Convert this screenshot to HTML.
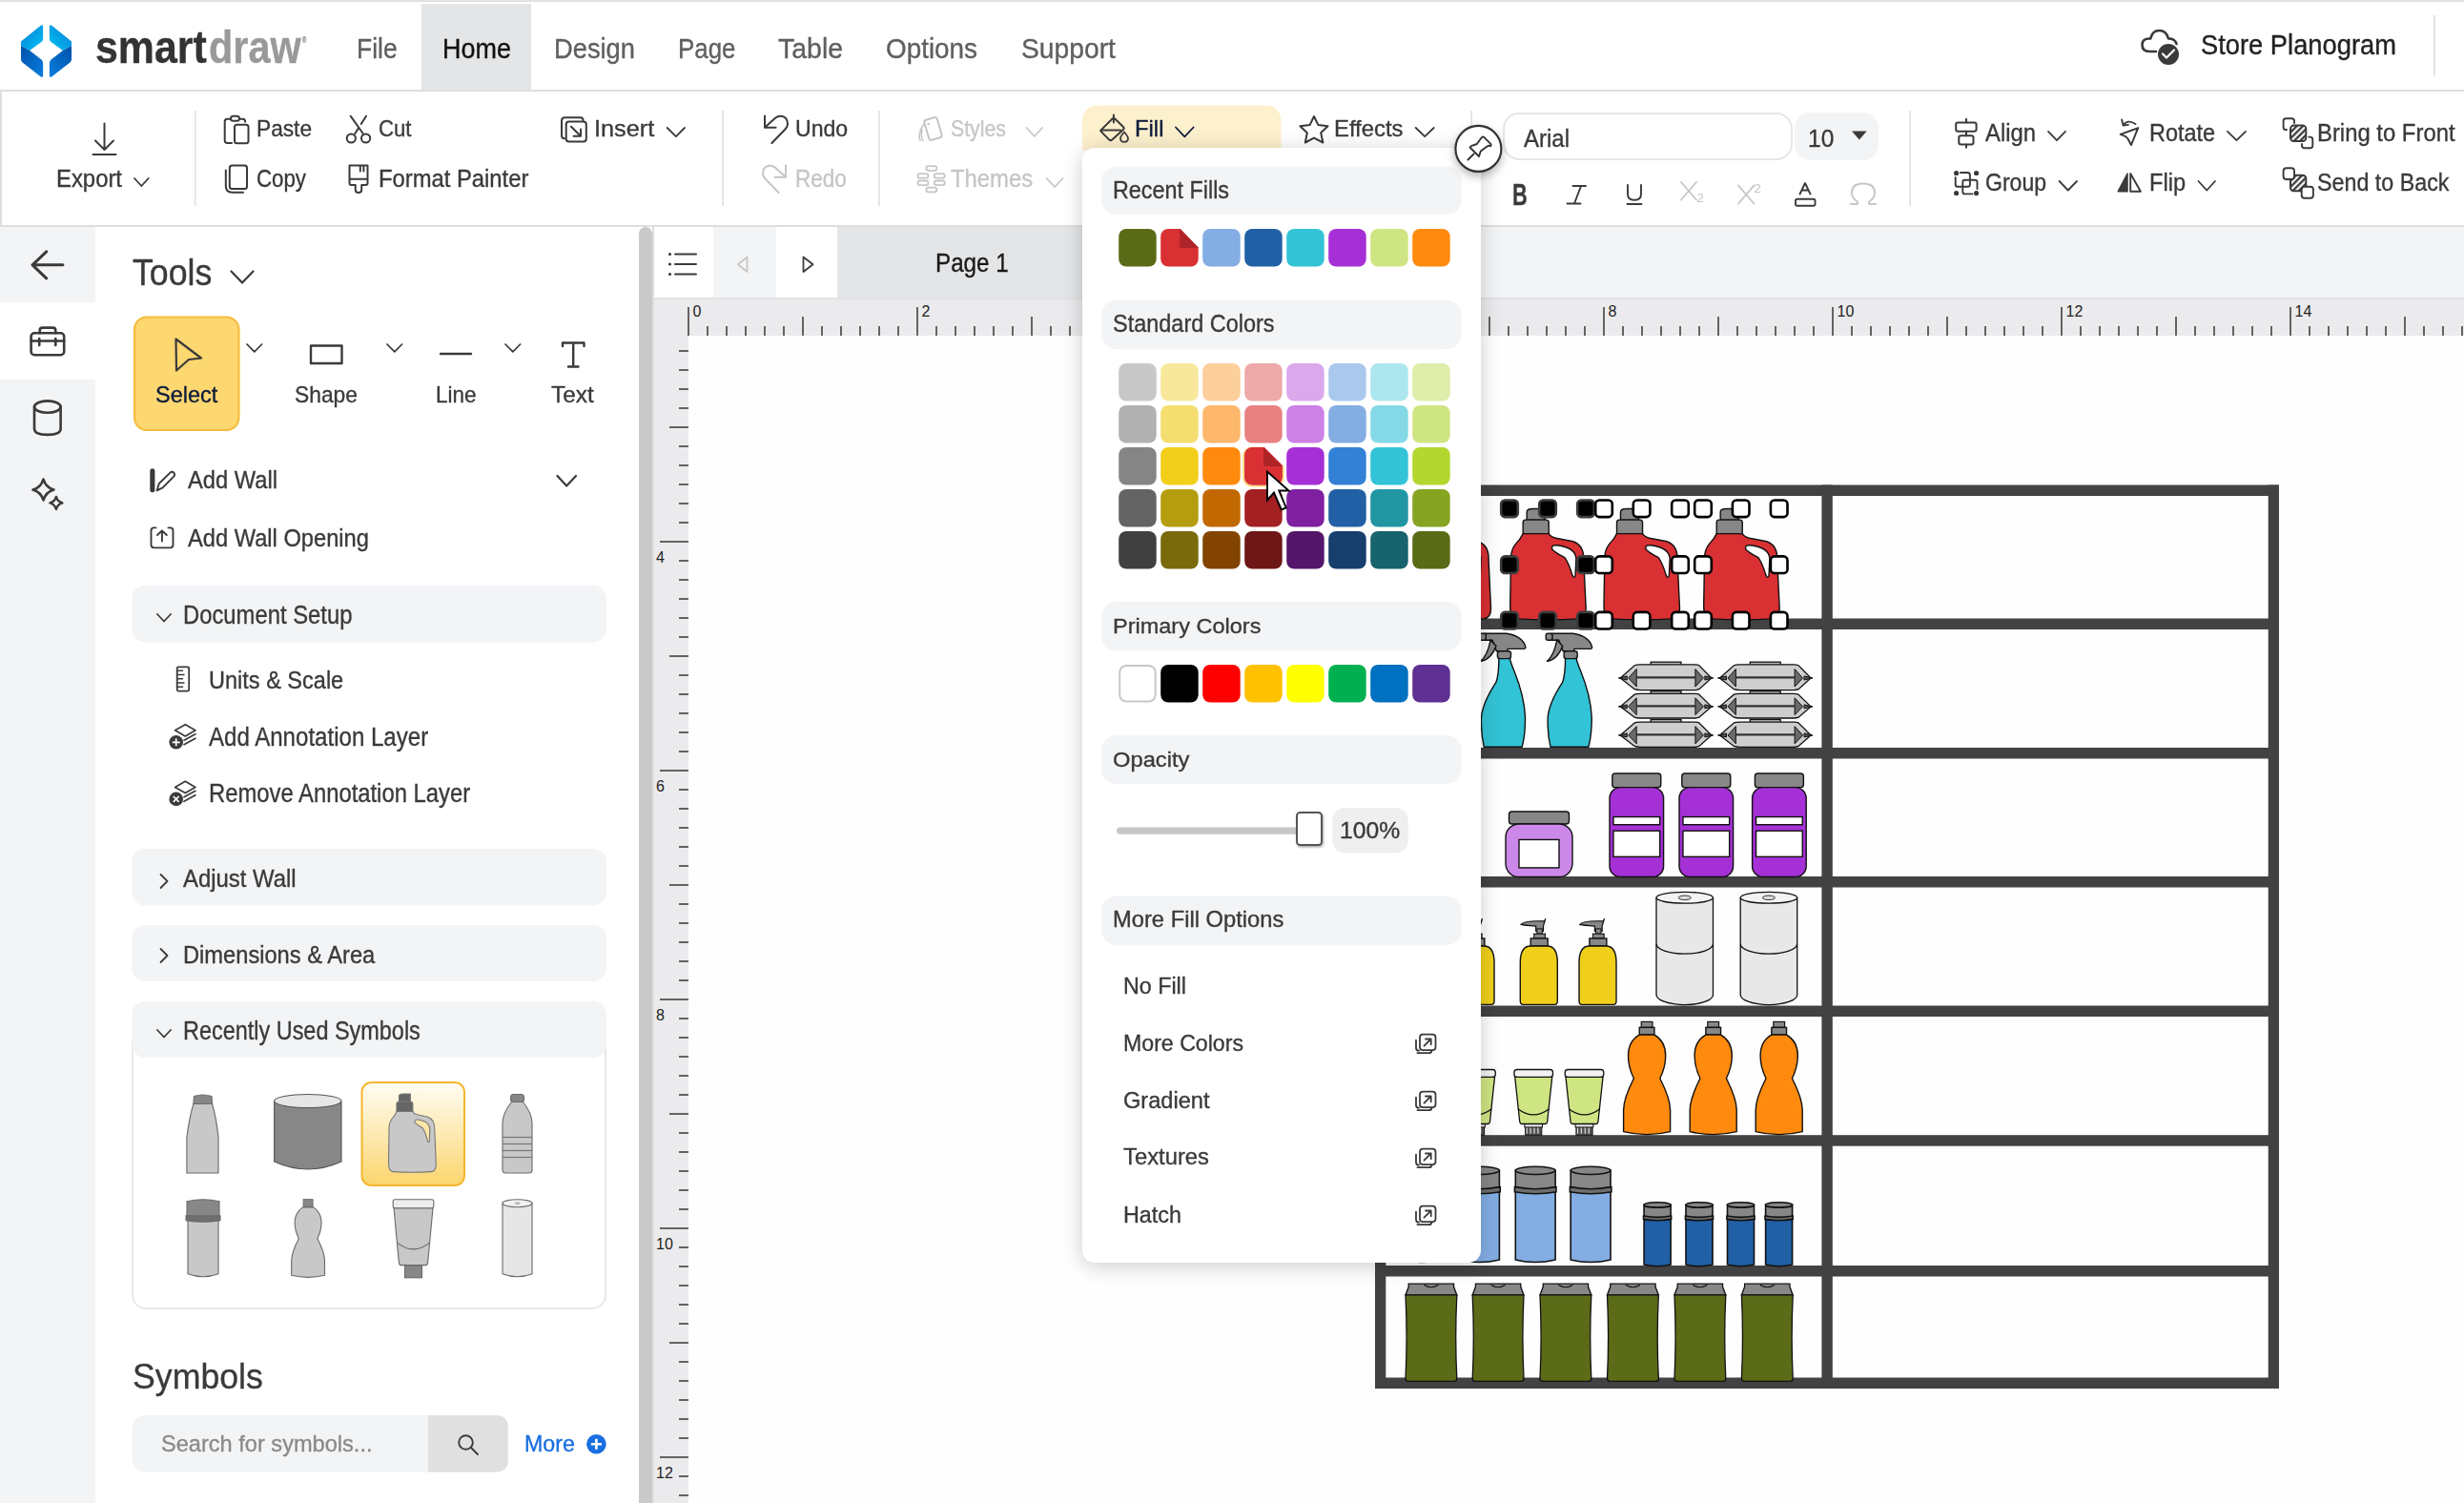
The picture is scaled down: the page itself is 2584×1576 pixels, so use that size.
<!DOCTYPE html><html><head><meta charset="utf-8"><style>
html,body{margin:0;padding:0;width:2584px;height:1576px;overflow:hidden;background:#fff;font-family:"Liberation Sans",sans-serif;}
.a{position:absolute;display:block;}
.t{position:absolute;white-space:nowrap;transform-origin:0 0;-webkit-text-stroke:0.35px currentColor;}
</style></head><body>
<div class="a" style="left:0px;top:0px;width:2584px;height:2px;background:#e1e1e1;"></div>
<div class="a" style="left:442px;top:4px;width:115px;height:90px;background:#e4e5e7;"></div>
<div class="a" style="left:0px;top:94px;width:2584px;height:2px;background:#dedede;"></div>
<div class="a" style="left:0px;top:96px;width:2px;height:142px;background:#dedede;"></div>
<div class="a" style="left:0px;top:236px;width:2584px;height:2px;background:#dedede;"></div>
<div class="a" style="left:0px;top:238px;width:100px;height:1338px;background:#f3f4f6;"></div>
<div class="a" style="left:0px;top:317px;width:100px;height:81px;background:#ffffff;"></div>
<div class="a" style="left:670px;top:238px;width:14px;height:1338px;background:#c9c9c9;border-radius:7px 7px 0 0"></div>
<div class="a" style="left:684px;top:238px;width:2px;height:1338px;background:#dedede;"></div>
<div class="a" style="left:686px;top:238px;width:62px;height:75px;background:#ffffff;"></div>
<div class="a" style="left:748px;top:238px;width:66px;height:75px;background:#f3f4f6;"></div>
<div class="a" style="left:814px;top:238px;width:64px;height:75px;background:#ffffff;"></div>
<div class="a" style="left:878px;top:238px;width:662px;height:75px;background:#e4e5e7;"></div>
<div class="a" style="left:1540px;top:238px;width:1044px;height:75px;background:#f3f4f6;"></div>
<div class="a" style="left:686px;top:312px;width:1898px;height:2px;background:#e2e2e4;"></div>
<div class="a" style="left:686px;top:314px;width:1898px;height:38px;background:#ebebed;"></div>
<div class="a" style="left:686px;top:352px;width:36px;height:1224px;background:#ebebed;"></div>
<div class="a" style="left:722px;top:352px;width:1862px;height:1224px;background:#fefefe;"></div>
<svg class="a" style="left:0;top:0" width="2584" height="1576"><path d="M1135 157.5 V128 Q1135 110.5 1153 110.5 H1325.5 Q1343.5 110.5 1343.5 128 V157.5 Z" fill="#fdf0cc"/><rect x="1577" y="119" width="302" height="48" rx="16" fill="#fff" stroke="#e6e6e6" stroke-width="2"/><rect x="1882" y="118" width="88" height="50" rx="16" fill="#f3f4f6"/><rect x="141" y="332.5" width="109.5" height="118.5" rx="13" fill="#fdd770" stroke="#f5bb3c" stroke-width="2"/><rect x="139" y="1080" width="496" height="292" rx="14" fill="#fff" stroke="#e8e8e8" stroke-width="2"/><rect x="138.4" y="613.8" width="497.6" height="59.90000000000009" rx="14" fill="#f3f4f6"/><rect x="138.4" y="890" width="497.6" height="59.5" rx="14" fill="#f3f4f6"/><rect x="138.4" y="970" width="497.6" height="59" rx="14" fill="#f3f4f6"/><rect x="138.4" y="1050" width="497.6" height="59" rx="14" fill="#f3f4f6"/><defs><linearGradient id="selg" x1="0" y1="0" x2="0" y2="1"><stop offset="0" stop-color="#fffdf4"/><stop offset="1" stop-color="#fcd56e"/></linearGradient></defs><rect x="379.5" y="1135" width="107.5" height="108" rx="10" fill="url(#selg)" stroke="#f5b630" stroke-width="2"/><rect x="138.7" y="1484" width="394" height="59.5" rx="13" fill="#f3f4f6"/><path d="M449 1484 H520 Q532.8 1484 532.8 1497 V1530.5 Q532.8 1543.5 520 1543.5 H449 Z" fill="#e0e0e0"/></svg>
<div class="t" style="left:100.2px;top:25.7px;font-size:48.00px;line-height:48.00px;color:#333;font-weight:bold;transform:scaleX(0.8930);">smart</div>
<div class="t" style="left:219.0px;top:25.7px;font-size:48.00px;line-height:48.00px;color:#999;font-weight:bold;transform:scaleX(0.8628);">draw</div>
<div class="t" style="left:317.4px;top:38.4px;font-size:9.00px;line-height:9.00px;color:#999;font-weight:normal;transform:scaleX(0.6500);">&reg;</div>
<div class="t" style="left:374.0px;top:37.3px;font-size:29.22px;line-height:29.22px;color:#5f5f5f;font-weight:normal;transform:scaleX(0.9057);">File</div>
<div class="t" style="left:463.7px;top:37.3px;font-size:29.22px;line-height:29.22px;color:#111;font-weight:normal;transform:scaleX(0.9230);">Home</div>
<div class="t" style="left:581.0px;top:37.3px;font-size:29.22px;line-height:29.22px;color:#5f5f5f;font-weight:normal;transform:scaleX(0.9340);">Design</div>
<div class="t" style="left:711.0px;top:37.3px;font-size:29.22px;line-height:29.22px;color:#5f5f5f;font-weight:normal;transform:scaleX(0.8869);">Page</div>
<div class="t" style="left:816.0px;top:37.3px;font-size:29.22px;line-height:29.22px;color:#5f5f5f;font-weight:normal;transform:scaleX(0.9739);">Table</div>
<div class="t" style="left:929.0px;top:37.3px;font-size:29.22px;line-height:29.22px;color:#5f5f5f;font-weight:normal;transform:scaleX(0.9538);">Options</div>
<div class="t" style="left:1071.0px;top:37.3px;font-size:29.22px;line-height:29.22px;color:#5f5f5f;font-weight:normal;transform:scaleX(0.9668);">Support</div>
<div class="t" style="left:2308.0px;top:33.4px;font-size:29.07px;line-height:29.07px;color:#222;font-weight:normal;transform:scaleX(0.9396);">Store Planogram</div>
<div class="t" style="left:1586.2px;top:188.7px;font-size:31.10px;line-height:31.10px;color:#3a3a3a;font-weight:bold;transform:scaleX(0.7010);">B</div>
<div class="t" style="left:269.0px;top:122.9px;font-size:24.71px;line-height:24.71px;color:#3a3a3a;font-weight:normal;transform:scaleX(0.9187);">Paste</div>
<div class="t" style="left:396.6px;top:122.9px;font-size:24.71px;line-height:24.71px;color:#3a3a3a;font-weight:normal;transform:scaleX(0.8953);">Cut</div>
<div class="t" style="left:622.7px;top:122.9px;font-size:24.71px;line-height:24.71px;color:#3a3a3a;font-weight:normal;transform:scaleX(1.0247);">Insert</div>
<div class="t" style="left:833.8px;top:122.9px;font-size:24.71px;line-height:24.71px;color:#3a3a3a;font-weight:normal;transform:scaleX(0.9347);">Undo</div>
<div class="t" style="left:997.0px;top:122.9px;font-size:24.71px;line-height:24.71px;color:#c6c6c6;font-weight:normal;transform:scaleX(0.8614);">Styles</div>
<div class="t" style="left:1189.6px;top:122.9px;font-size:24.71px;line-height:24.71px;color:#0d1b3a;font-weight:normal;transform:scaleX(0.9649);">Fill</div>
<div class="t" style="left:1399.0px;top:122.9px;font-size:24.71px;line-height:24.71px;color:#3a3a3a;font-weight:normal;transform:scaleX(0.9652);">Effects</div>
<div class="t" style="left:1598.0px;top:132.7px;font-size:25.00px;line-height:25.00px;color:#3a3a3a;font-weight:normal;transform:scaleX(0.9600);">Arial</div>
<div class="t" style="left:1895.8px;top:132.7px;font-size:25.00px;line-height:25.00px;color:#3a3a3a;font-weight:normal;transform:scaleX(0.9802);">10</div>
<div class="t" style="left:2082.0px;top:126.6px;font-size:25.00px;line-height:25.00px;color:#3a3a3a;font-weight:normal;transform:scaleX(0.9528);">Align</div>
<div class="t" style="left:2254.0px;top:126.6px;font-size:25.00px;line-height:25.00px;color:#3a3a3a;font-weight:normal;transform:scaleX(0.9372);">Rotate</div>
<div class="t" style="left:2430.0px;top:126.6px;font-size:25.00px;line-height:25.00px;color:#3a3a3a;font-weight:normal;transform:scaleX(0.9545);">Bring to Front</div>
<div class="t" style="left:59.0px;top:175.4px;font-size:25.00px;line-height:25.00px;color:#3a3a3a;font-weight:normal;transform:scaleX(0.9550);">Export</div>
<div class="t" style="left:269.0px;top:175.4px;font-size:25.00px;line-height:25.00px;color:#3a3a3a;font-weight:normal;transform:scaleX(0.8908);">Copy</div>
<div class="t" style="left:396.6px;top:175.4px;font-size:25.00px;line-height:25.00px;color:#3a3a3a;font-weight:normal;transform:scaleX(0.9518);">Format Painter</div>
<div class="t" style="left:833.8px;top:175.4px;font-size:25.00px;line-height:25.00px;color:#c6c6c6;font-weight:normal;transform:scaleX(0.9004);">Redo</div>
<div class="t" style="left:997.0px;top:175.4px;font-size:25.00px;line-height:25.00px;color:#c6c6c6;font-weight:normal;transform:scaleX(0.9529);">Themes</div>
<div class="t" style="left:2082.0px;top:179.0px;font-size:25.44px;line-height:25.44px;color:#3a3a3a;font-weight:normal;transform:scaleX(0.9051);">Group</div>
<div class="t" style="left:2254.0px;top:179.0px;font-size:25.44px;line-height:25.44px;color:#3a3a3a;font-weight:normal;transform:scaleX(0.9279);">Flip</div>
<div class="t" style="left:2430.0px;top:179.0px;font-size:25.44px;line-height:25.44px;color:#3a3a3a;font-weight:normal;transform:scaleX(0.9150);">Send to Back</div>
<div class="t" style="left:138.6px;top:266.5px;font-size:38.37px;line-height:38.37px;color:#3a3a3a;font-weight:normal;transform:scaleX(0.9308);">Tools</div>
<div class="t" style="left:162.5px;top:401.8px;font-size:24.27px;line-height:24.27px;color:#0d1b3a;font-weight:normal;transform:scaleX(0.9677);">Select</div>
<div class="t" style="left:309.0px;top:401.8px;font-size:24.27px;line-height:24.27px;color:#3a3a3a;font-weight:normal;transform:scaleX(0.9408);">Shape</div>
<div class="t" style="left:456.5px;top:401.8px;font-size:24.27px;line-height:24.27px;color:#3a3a3a;font-weight:normal;transform:scaleX(0.9264);">Line</div>
<div class="t" style="left:578.0px;top:401.8px;font-size:24.27px;line-height:24.27px;color:#3a3a3a;font-weight:normal;transform:scaleX(1.0036);">Text</div>
<div class="t" style="left:197.0px;top:491.7px;font-size:24.85px;line-height:24.85px;color:#3a3a3a;font-weight:normal;transform:scaleX(0.9538);">Add Wall</div>
<div class="t" style="left:197.0px;top:550.9px;font-size:26.16px;line-height:26.16px;color:#3a3a3a;font-weight:normal;transform:scaleX(0.9049);">Add Wall Opening</div>
<div class="t" style="left:192.0px;top:632.1px;font-size:26.74px;line-height:26.74px;color:#3a3a3a;font-weight:normal;transform:scaleX(0.8909);">Document Setup</div>
<div class="t" style="left:218.7px;top:699.7px;font-size:26.16px;line-height:26.16px;color:#3a3a3a;font-weight:normal;transform:scaleX(0.8994);">Units &amp; Scale</div>
<div class="t" style="left:218.7px;top:758.7px;font-size:27.18px;line-height:27.18px;color:#3a3a3a;font-weight:normal;transform:scaleX(0.8858);">Add Annotation Layer</div>
<div class="t" style="left:218.7px;top:818.7px;font-size:26.89px;line-height:26.89px;color:#3a3a3a;font-weight:normal;transform:scaleX(0.8863);">Remove Annotation Layer</div>
<div class="t" style="left:192.0px;top:908.4px;font-size:26.02px;line-height:26.02px;color:#3a3a3a;font-weight:normal;transform:scaleX(0.9189);">Adjust Wall</div>
<div class="t" style="left:192.0px;top:989.4px;font-size:25.15px;line-height:25.15px;color:#3a3a3a;font-weight:normal;transform:scaleX(0.9412);">Dimensions &amp; Area</div>
<div class="t" style="left:192.0px;top:1067.7px;font-size:27.03px;line-height:27.03px;color:#3a3a3a;font-weight:normal;transform:scaleX(0.8677);">Recently Used Symbols</div>
<div class="t" style="left:138.7px;top:1426.2px;font-size:36.77px;line-height:36.77px;color:#3a3a3a;font-weight:normal;transform:scaleX(0.9707);">Symbols</div>
<div class="t" style="left:168.5px;top:1501.6px;font-size:24.13px;line-height:24.13px;color:#8a8a8a;font-weight:normal;transform:scaleX(0.9777);">Search for symbols...</div>
<div class="t" style="left:549.6px;top:1501.6px;font-size:24.13px;line-height:24.13px;color:#1a6fe0;font-weight:normal;transform:scaleX(0.9616);">More</div>
<div class="t" style="left:980.6px;top:263.1px;font-size:27.03px;line-height:27.03px;color:#1a1a1a;font-weight:normal;transform:scaleX(0.8961);">Page 1</div>
<svg class="a" style="left:0;top:0" width="2584" height="1576"><defs><linearGradient id="lg1" x1="0" y1="0" x2="1" y2="1"><stop offset="0" stop-color="#0a7ad6"/><stop offset="1" stop-color="#00c4f4"/></linearGradient><linearGradient id="lg2" x1="0" y1="0" x2="1" y2="1"><stop offset="0" stop-color="#0050a8"/><stop offset="1" stop-color="#0a7ee0"/></linearGradient><linearGradient id="lg3" x1="1" y1="0" x2="0" y2="1"><stop offset="0" stop-color="#0a7ad6"/><stop offset="1" stop-color="#00c4f4"/></linearGradient><linearGradient id="lg4" x1="1" y1="0" x2="0" y2="1"><stop offset="0" stop-color="#0050a8"/><stop offset="1" stop-color="#0a7ee0"/></linearGradient></defs><path d="M22 43.5 L43 26.6 Q45.1 25.6 45.1 28 L45.1 40.5 Q45 42.8 43.4 44 L31.1 53.1 L22 48 Z" fill="url(#lg1)"/><path d="M22 48 L31.1 53.1 L43.4 62.6 Q45.1 64.2 45.1 66.5 L45.1 79 Q45 81.8 42.8 80.4 L23.6 65.5 Q22 64 22 62 Z" fill="url(#lg2)"/><path d="M75 43.5 L54 26.6 Q51.9 25.6 51.9 28 L51.9 40.5 Q52 42.8 53.6 44 L65.9 53.1 L75 48 Z" fill="url(#lg3)"/><path d="M75 48 L65.9 53.1 L53.6 62.6 Q51.9 64.2 51.9 66.5 L51.9 79 Q52 81.8 54.2 80.4 L73.4 65.5 Q75 64 75 62 Z" fill="url(#lg4)"/><path d="M109.5 129.5 V157 M100 147.5 L109.5 157 L119 147.5 M97.5 162 H121.5" fill="none" stroke="#3a3a3a" stroke-width="2" stroke-linecap="round" stroke-linejoin="round"/><path d="M141 187 L148.35 195 L155.7 187" fill="none" stroke="#3a3a3a" stroke-width="1.8" stroke-linecap="round" stroke-linejoin="round"/><path d="M699.7 134 L708.85 143.2 L718 134" fill="none" stroke="#3a3a3a" stroke-width="1.8" stroke-linecap="round" stroke-linejoin="round"/><path d="M1076.5 134 L1084.75 143 L1093 134" fill="none" stroke="#c6c6c6" stroke-width="1.8" stroke-linecap="round" stroke-linejoin="round"/><path d="M1097.6 187 L1106.05 196 L1114.5 187" fill="none" stroke="#c6c6c6" stroke-width="1.8" stroke-linecap="round" stroke-linejoin="round"/><path d="M1233 133.5 L1242.3 143.3 L1251.6 133.5" fill="none" stroke="#0d1b3a" stroke-width="1.8" stroke-linecap="round" stroke-linejoin="round"/><path d="M1484.7 134 L1494.2 143.2 L1503.7 134" fill="none" stroke="#3a3a3a" stroke-width="1.8" stroke-linecap="round" stroke-linejoin="round"/><path d="M2148 137.8 L2157.0 147.1 L2166 137.8" fill="none" stroke="#3a3a3a" stroke-width="1.8" stroke-linecap="round" stroke-linejoin="round"/><path d="M2336 137.8 L2345.5 147.1 L2355 137.8" fill="none" stroke="#3a3a3a" stroke-width="1.8" stroke-linecap="round" stroke-linejoin="round"/><path d="M2159.6 190 L2168.8 199.5 L2178 190" fill="none" stroke="#3a3a3a" stroke-width="1.8" stroke-linecap="round" stroke-linejoin="round"/><path d="M2305.5 190 L2314.25 199.5 L2323 190" fill="none" stroke="#3a3a3a" stroke-width="1.8" stroke-linecap="round" stroke-linejoin="round"/><rect x="203.7" y="116" width="2" height="100" fill="#e6e6e6"/><rect x="757" y="116" width="2" height="100" fill="#e6e6e6"/><rect x="921" y="116" width="2" height="100" fill="#e6e6e6"/><rect x="1542" y="116" width="2" height="100" fill="#e6e6e6"/><rect x="2002" y="116" width="2" height="100" fill="#e6e6e6"/><rect x="2552" y="16" width="2" height="63" fill="#e3e3e3"/><path d="M243 150 H238.5 Q235.7 150 235.7 147 V127.5 Q235.7 124.8 238.5 124.8 H242 M251 124.8 H254.5 Q257.2 124.8 257.2 127.8" fill="none" stroke="#3a3a3a" stroke-width="2" stroke-linecap="round" stroke-linejoin="round"/><rect x="242" y="121.7" width="9" height="5" rx="2.5" fill="none" stroke="#3a3a3a" stroke-width="2" stroke-linecap="round" stroke-linejoin="round"/><rect x="246" y="130.8" width="14.5" height="19.4" rx="2.5" fill="none" stroke="#3a3a3a" stroke-width="2" stroke-linecap="round" stroke-linejoin="round"/><path d="M367.6 121.7 L380.7 140 M384 121.7 L378.7 130 M376.2 134 L372.3 140" fill="none" stroke="#3a3a3a" stroke-width="2" stroke-linecap="round" stroke-linejoin="round"/><circle cx="368.3" cy="145" r="4.6" fill="none" stroke="#3a3a3a" stroke-width="2" stroke-linecap="round" stroke-linejoin="round"/><circle cx="383.6" cy="145" r="4.6" fill="none" stroke="#3a3a3a" stroke-width="2" stroke-linecap="round" stroke-linejoin="round"/><rect x="240.8" y="173.5" width="18.2" height="24.5" rx="2.5" fill="none" stroke="#3a3a3a" stroke-width="2" stroke-linecap="round" stroke-linejoin="round"/><path d="M236.8 178.5 V195 Q236.8 201.7 243.4 201.7 H255" fill="none" stroke="#3a3a3a" stroke-width="2" stroke-linecap="round" stroke-linejoin="round"/><path d="M366.5 173.5 H385.5 V192 Q385.5 194 383.5 194 H379.2 V199 Q379.2 202 376 202 Q372.7 202 372.7 199 V194 H368.5 Q366.5 194 366.5 192 Z M366.5 187.8 H385.5 M377.8 174 V179.5 M381.4 174 V179.5" fill="none" stroke="#3a3a3a" stroke-width="2" stroke-linecap="round" stroke-linejoin="round"/><path d="M592 145.3 Q589 145.3 589 142 V126.5 Q589 123.2 592.5 123.2 H608.5 Q611.6 123.2 611.6 126.5" fill="none" stroke="#3a3a3a" stroke-width="2" stroke-linecap="round" stroke-linejoin="round"/><rect x="593.7" y="127.4" width="21.1" height="21.1" rx="3" fill="none" stroke="#3a3a3a" stroke-width="2" stroke-linecap="round" stroke-linejoin="round"/><path d="M599 132.7 L609 142.7 M609 135.5 V142.7 H601.5" fill="none" stroke="#3a3a3a" stroke-width="2" stroke-linecap="round" stroke-linejoin="round"/><path d="M802 121.5 V133.7 H813.6 M802.5 133.2 L813 123.8 Q816 121.3 819.5 121.8 Q826 123 826 130 Q826 133 823.5 135.5 L809.4 150" fill="none" stroke="#3a3a3a" stroke-width="2" stroke-linecap="round" stroke-linejoin="round"/><path d="M824 173.5 V185.7 H812.4 M823.5 185.2 L813 175.8 Q810 173.3 806.5 173.8 Q800 175 800 182 Q800 185 802.5 187.5 L816.6 202" fill="none" stroke="#c6c6c6" stroke-width="2" stroke-linecap="round" stroke-linejoin="round"/><g transform="rotate(-16 978.5 135)"><rect x="971.5" y="124" width="14" height="22" rx="2.5" fill="none" stroke="#c6c6c6" stroke-width="2" stroke-linecap="round" stroke-linejoin="round"/></g><circle cx="973.8" cy="130" r="1.3" fill="#c6c6c6"/><path d="M969 130 Q962 140 965 147.5 M967 136 Q965 143 968 147.5" fill="none" stroke="#c6c6c6" stroke-width="1.6" stroke-linecap="round" stroke-linejoin="round"/><rect x="971.4" y="174.2" width="11" height="4.6" rx="2.3" fill="none" stroke="#c6c6c6" stroke-width="1.8" stroke-linecap="round" stroke-linejoin="round"/><rect x="962.5" y="182.1" width="11" height="4.6" rx="2.3" fill="none" stroke="#c6c6c6" stroke-width="1.8" stroke-linecap="round" stroke-linejoin="round"/><rect x="979.8" y="182.1" width="11" height="4.6" rx="2.3" fill="none" stroke="#c6c6c6" stroke-width="1.8" stroke-linecap="round" stroke-linejoin="round"/><rect x="962.5" y="189.5" width="11" height="4.6" rx="2.3" fill="none" stroke="#c6c6c6" stroke-width="1.8" stroke-linecap="round" stroke-linejoin="round"/><rect x="979.8" y="189.5" width="11" height="4.6" rx="2.3" fill="none" stroke="#c6c6c6" stroke-width="1.8" stroke-linecap="round" stroke-linejoin="round"/><rect x="971.4" y="196.7" width="11" height="4.6" rx="2.3" fill="none" stroke="#c6c6c6" stroke-width="1.8" stroke-linecap="round" stroke-linejoin="round"/><path d="M1167.9 120.5 V128.5 M1154.6 136.4 L1166.3 124.7 Q1167.9 123.2 1169.5 124.7 L1177.9 133 Q1179.3 134.5 1177.9 136 L1166.3 146.4 Q1164.7 147.8 1163.1 146.4 L1154.6 137.9 Q1153.8 137 1154.6 136.4 Z M1155 136.4 H1175" fill="none" stroke="#3a3a3a" stroke-width="2" stroke-linecap="round" stroke-linejoin="round"/><path d="M1179 138.5 Q1183 143 1183 145 Q1183 148.8 1179 148.8 Q1175 148.8 1175 145 Q1175 143 1179 138.5 Z" fill="none" stroke="#3a3a3a" stroke-width="1.8" stroke-linecap="round" stroke-linejoin="round"/><path d="M1378 122 L1382.3 130.9 L1392.5 132.3 L1385.2 139.3 L1387.4 149.5 L1378 144.6 L1368.8 149.5 L1370.8 139.3 L1363.4 132.3 L1373.7 130.9 Z" fill="none" stroke="#3a3a3a" stroke-width="2" stroke-linecap="round" stroke-linejoin="round"/><path d="M1942 137.5 H1957.7 L1949.85 146.4 Z" fill="#3a3a3a"/><path d="M1658 195 L1651 213.5 M1649.5 195 H1663 M1643.5 213.5 H1657.5" fill="none" stroke="#3a3a3a" stroke-width="1.9" stroke-linecap="round" stroke-linejoin="round"/><path d="M1707 194 V203.5 Q1707 209.8 1714 209.8 Q1721 209.8 1721 203.5 V194 M1706.5 214 H1721.5" fill="none" stroke="#3a3a3a" stroke-width="1.9" stroke-linecap="round" stroke-linejoin="round"/><path d="M1763 191 L1779 209.5 M1779 191 L1763 209.5" fill="none" stroke="#c6c6c6" stroke-width="1.9" stroke-linecap="round" stroke-linejoin="round"/><text x="1779.5" y="211.5" font-family="Liberation Sans" font-size="13" fill="#c6c6c6">2</text><path d="M1823 194.5 L1839.5 213.5 M1839.5 194.5 L1823 213.5" fill="none" stroke="#c6c6c6" stroke-width="1.9" stroke-linecap="round" stroke-linejoin="round"/><text x="1839.5" y="201.5" font-family="Liberation Sans" font-size="13" fill="#c6c6c6">2</text><path d="M1887.5 203.5 L1893 192 L1898.5 203.5 M1889.5 199.5 H1896.5" fill="none" stroke="#3a3a3a" stroke-width="1.9" stroke-linecap="round" stroke-linejoin="round"/><rect x="1883" y="208.8" width="20.5" height="7" rx="1.8" fill="none" stroke="#3a3a3a" stroke-width="1.9" stroke-linecap="round" stroke-linejoin="round"/><path d="M1941 214 H1948 V211.5 Q1942 208 1942 202 Q1942 192.5 1954 192.5 Q1966 192.5 1966 202 Q1966 208 1960 211.5 V214 H1967" fill="none" stroke="#c6c6c6" stroke-width="1.9" stroke-linecap="round" stroke-linejoin="round"/><path d="M2062 124.8 V128.4 M2062 137.8 V142.2 M2062 151.4 V154.7" fill="none" stroke="#3a3a3a" stroke-width="2" stroke-linecap="round" stroke-linejoin="round"/><rect x="2051.2" y="128.4" width="21.4" height="9.4" rx="2.2" fill="none" stroke="#3a3a3a" stroke-width="2" stroke-linecap="round" stroke-linejoin="round"/><rect x="2054.3" y="142.2" width="15.2" height="9.2" rx="2.2" fill="none" stroke="#3a3a3a" stroke-width="2" stroke-linecap="round" stroke-linejoin="round"/><path d="M2242.2 134.2 L2223.7 140.9 Q2230 143 2231.5 145.5 L2235 152 Z" fill="none" stroke="#3a3a3a" stroke-width="2" stroke-linecap="round" stroke-linejoin="round"/><path d="M2226.5 131.5 Q2231 124.5 2239.5 130 M2226.5 131.5 L2225.2 125.5 M2226.5 131.5 L2232 130.8" fill="none" stroke="#3a3a3a" stroke-width="1.8" stroke-linecap="round" stroke-linejoin="round"/><circle cx="2051.6" cy="181.5" r="2.6" fill="#3a3a3a"/><circle cx="2072.6" cy="181.5" r="2.6" fill="#3a3a3a"/><circle cx="2051.6" cy="202.5" r="2.6" fill="#3a3a3a"/><circle cx="2072.6" cy="202.5" r="2.6" fill="#3a3a3a"/><path d="M2056 181 H2063.5 Q2065.9 181 2065.9 183.5 V193.5 Q2065.9 195.8 2063.5 195.8 H2053 Q2050.7 195.8 2050.7 193.5 V186" fill="none" stroke="#3a3a3a" stroke-width="1.9" stroke-linecap="round" stroke-linejoin="round"/><path d="M2068.5 203.4 H2060.5 Q2058.3 203.4 2058.3 201 V191 Q2058.3 188.7 2060.5 188.7 H2071 Q2073.5 188.7 2073.5 191 V198" fill="none" stroke="#3a3a3a" stroke-width="1.9" stroke-linecap="round" stroke-linejoin="round"/><path d="M2231 182 L2221.3 200.7 H2231 Z" fill="#3a3a3a" stroke="#3a3a3a" stroke-width="1.5" stroke-linejoin="round"/><path d="M2234.2 182 V200.7 H2244.9 Z" fill="none" stroke="#3a3a3a" stroke-width="1.9" stroke-linecap="round" stroke-linejoin="round"/><defs><pattern id="hatch" width="4.5" height="4.5" patternUnits="userSpaceOnUse" patternTransform="rotate(45)"><rect width="4.5" height="4.5" fill="#fff"/><rect width="2.3" height="4.5" fill="#3a3a3a"/></pattern></defs><path d="M2398 136 H2397 Q2394.6 136 2394.6 133.5 V127 Q2394.6 124.3 2397.3 124.3 H2403.3 Q2406 124.3 2406 127 V129" fill="none" stroke="#3a3a3a" stroke-width="1.9" stroke-linecap="round" stroke-linejoin="round"/><rect x="2402" y="131.6" width="16.3" height="16.4" rx="3.5" fill="url(#hatch)" stroke="#3a3a3a" stroke-width="2"/><path d="M2421.3 143.6 H2422.5 Q2425.3 143.6 2425.3 146.4 V152.5 Q2425.3 155.3 2422.5 155.3 H2416.7 Q2414 155.3 2414 152.5 V151" fill="none" stroke="#3a3a3a" stroke-width="1.9" stroke-linecap="round" stroke-linejoin="round"/><path d="M2406 192 Q2402 192 2402 196 V197 Q2402 200.3 2405.5 200.3 H2410" fill="url(#hatch)" stroke="none"/><rect x="2402" y="183.7" width="16.3" height="16.6" rx="3.5" fill="url(#hatch)" stroke="#3a3a3a" stroke-width="2"/><rect x="2394.6" y="176.3" width="11.4" height="11.7" rx="3" fill="#fff" stroke="#3a3a3a" stroke-width="1.9"/><rect x="2413.7" y="195.7" width="12.2" height="12" rx="3" fill="#fff" stroke="#3a3a3a" stroke-width="1.9"/><path d="M2261 54 H2254 Q2246.5 54 2246.5 47 Q2246.5 40.5 2254 40.5 H2255.3 Q2257 32 2264.5 32 Q2272 32 2274 40.5 H2275.5 Q2281 41 2282.5 46" fill="none" stroke="#3a3a3a" stroke-width="2.6" stroke-linecap="round" stroke-linejoin="round"/><circle cx="2274" cy="57" r="11" fill="#3a3a3a"/><path d="M2268 56.5 L2272 60.5 L2280 52.5" fill="none" stroke="#fff" stroke-width="2.2" stroke-linecap="round" stroke-linejoin="round"/><path d="M65.9 277.8 H34 M48.7 263.9 L34 277.8 L48.7 291.8" fill="none" stroke="#3a3a3a" stroke-width="3" stroke-linecap="round" stroke-linejoin="round"/><rect x="32.6" y="349.3" width="34.6" height="22.9" rx="3.5" fill="none" stroke="#3a3a3a" stroke-width="2.6" stroke-linecap="round" stroke-linejoin="round"/><path d="M41.7 349.3 V346.5 Q41.7 343.6 44.5 343.6 H55.5 Q58.3 343.6 58.3 346.5 V349.3 M32.6 357.5 H67.2 M41.2 355 V362 M58.3 355 V362" fill="none" stroke="#3a3a3a" stroke-width="2.6" stroke-linecap="round" stroke-linejoin="round"/><ellipse cx="49.8" cy="426.6" rx="13.8" ry="6.2" fill="none" stroke="#3a3a3a" stroke-width="2.6" stroke-linecap="round" stroke-linejoin="round"/><path d="M36 426.6 V449.5 Q36 455.9 49.8 455.9 Q63.6 455.9 63.6 449.5 V426.6" fill="none" stroke="#3a3a3a" stroke-width="2.6" stroke-linecap="round" stroke-linejoin="round"/><path d="M45.5 502.5 Q47.92 511.08 56.5 513.5 Q47.92 515.92 45.5 524.5 Q43.08 515.92 34.5 513.5 Q43.08 511.08 45.5 502.5 Z" fill="none" stroke="#3a3a3a" stroke-width="2.6" stroke-linecap="round" stroke-linejoin="round"/><path d="M58.9 520.9 Q60.33 525.97 65.4 527.4 Q60.33 528.8299999999999 58.9 533.9 Q57.47 528.8299999999999 52.4 527.4 Q57.47 525.97 58.9 520.9 Z" fill="none" stroke="#3a3a3a" stroke-width="2.4" stroke-linecap="round" stroke-linejoin="round"/><path d="M242.5 284.5 L254 296.5 L265.5 284.5" fill="none" stroke="#3a3a3a" stroke-width="2.2" stroke-linecap="round" stroke-linejoin="round"/><path d="M184.5 355.5 L211 375.5 L198 377 L185 388.5 Z" fill="none" stroke="#3a3a3a" stroke-width="2.2" stroke-linecap="round" stroke-linejoin="round"/><path d="M259 361 L266.8 368.8 L274.6 361 M406 361 L413.8 368.8 L421.6 361 M530 361 L537.8 368.8 L545.6 361" fill="none" stroke="#3a3a3a" stroke-width="1.7" stroke-linecap="round" stroke-linejoin="round"/><rect x="326" y="362.5" width="32.5" height="18.5" fill="none" stroke="#3a3a3a" stroke-width="2.4" stroke-linecap="round" stroke-linejoin="round"/><path d="M462 371 H494" fill="none" stroke="#3a3a3a" stroke-width="2.4" stroke-linecap="round" stroke-linejoin="round"/><path d="M590 359.5 H612.5 M590 359.5 V363 M612.5 359.5 V363 M601.2 359.5 V384.5 M596 384.5 H606.5" fill="none" stroke="#3a3a3a" stroke-width="2.4" stroke-linecap="round" stroke-linejoin="round"/><rect x="157.3" y="491.3" width="5.1" height="24.9" rx="2.5" fill="#3a3a3a"/><path d="M164.6 514.4 L166.8 507 L178.5 495.6 Q180.5 494 182.4 495.8 Q184 497.8 182.2 499.6 L170.6 511.4 Z" fill="none" stroke="#3a3a3a" stroke-width="1.9" stroke-linecap="round" stroke-linejoin="round"/><path d="M584.5 499 L594.2 509.5 L604 499" fill="none" stroke="#3a3a3a" stroke-width="2.2" stroke-linecap="round" stroke-linejoin="round"/><path d="M163.5 553.4 H161.4 Q158.5 553.4 158.5 556.5 V571.3 Q158.5 574.4 161.5 574.4 H178.5 Q181.5 574.4 181.5 571.3 V556.5 Q181.5 553.4 178.5 553.4 H176.5 M169.9 567.6 V556.6 M165 561 L169.9 556.4 L174.8 561" fill="none" stroke="#3a3a3a" stroke-width="1.9" stroke-linecap="round" stroke-linejoin="round"/><path d="M165 644 L172 651.5 L179 644 M165 1080 L172 1087.5 L179 1080" fill="none" stroke="#3a3a3a" stroke-width="1.8" stroke-linecap="round" stroke-linejoin="round"/><path d="M168.5 917 L175.5 924 L168.5 931 M168.5 995 L175.5 1002 L168.5 1009" fill="none" stroke="#3a3a3a" stroke-width="1.8" stroke-linecap="round" stroke-linejoin="round"/><rect x="185.7" y="699.4" width="12.5" height="25.2" rx="1.5" fill="none" stroke="#3a3a3a" stroke-width="1.8" stroke-linecap="round" stroke-linejoin="round"/><path d="M186.5 703.3 H191.5 M186.5 707.6 H193 M186.5 711.8 H191.5 M186.5 716 H193 M186.5 720.3 H191.5" fill="none" stroke="#3a3a3a" stroke-width="1.5" stroke-linecap="round" stroke-linejoin="round"/><path d="M183.6 765.8000000000001 L194.3 759.7 L204.9 765.8000000000001 L194.3 772.0 Z" fill="none" stroke="#3a3a3a" stroke-width="1.7" stroke-linecap="round" stroke-linejoin="round"/><path d="M193 776.2 L204.9 769.7 M193 780.7 L204.9 774.2" fill="none" stroke="#3a3a3a" stroke-width="1.7" stroke-linecap="round" stroke-linejoin="round"/><circle cx="184.7" cy="778.3000000000001" r="7.3" fill="#3a3a3a"/><path d="M184.7 774.3000000000001 V782.3000000000001 M180.7 778.3000000000001 H188.7" stroke="#fff" stroke-width="1.7"/><path d="M183.6 825.4 L194.3 819.3 L204.9 825.4 L194.3 831.5999999999999 Z" fill="none" stroke="#3a3a3a" stroke-width="1.7" stroke-linecap="round" stroke-linejoin="round"/><path d="M193 835.8 L204.9 829.3 M193 840.3 L204.9 833.8" fill="none" stroke="#3a3a3a" stroke-width="1.7" stroke-linecap="round" stroke-linejoin="round"/><circle cx="184.7" cy="837.9" r="7.3" fill="#3a3a3a"/><path d="M181.8 835.0 L187.6 840.8 M187.6 835.0 L181.8 840.8" stroke="#fff" stroke-width="1.7"/><circle cx="488.5" cy="1512.5" r="7.3" fill="none" stroke="#3a3a3a" stroke-width="1.9" stroke-linecap="round" stroke-linejoin="round"/><path d="M494 1518 L501 1525" fill="none" stroke="#3a3a3a" stroke-width="1.9" stroke-linecap="round" stroke-linejoin="round"/><circle cx="625.4" cy="1514.3" r="10.3" fill="#1a6fe0"/><path d="M625.4 1508.8 V1519.8 M619.9 1514.3 H630.9" stroke="#fff" stroke-width="2.6"/><path d="M708 266.5 H730 M708 277 H730 M708 287.5 H730" fill="none" stroke="#3a3a3a" stroke-width="2" stroke-linecap="round" stroke-linejoin="round"/><circle cx="702.5" cy="266.5" r="1.6" fill="#3a3a3a"/><circle cx="702.5" cy="277" r="1.6" fill="#3a3a3a"/><circle cx="702.5" cy="287.5" r="1.6" fill="#3a3a3a"/><path d="M783.5 269.5 L774 277.3 L783.5 285 Z" fill="none" stroke="#c6c6c6" stroke-width="1.8" stroke-linecap="round" stroke-linejoin="round"/><path d="M842.5 269.5 L852.5 277.3 L842.5 285 Z" fill="none" stroke="#3a3a3a" stroke-width="1.8" stroke-linecap="round" stroke-linejoin="round"/><rect x="721.1" y="322" width="1.8" height="30" fill="#555"/><text x="726.5" y="332" font-family="Liberation Sans" font-size="16" fill="#222">0</text><rect x="741.1" y="342" width="1.8" height="10" fill="#555"/><rect x="761.1" y="342" width="1.8" height="10" fill="#555"/><rect x="781.1" y="342" width="1.8" height="10" fill="#555"/><rect x="801.1" y="342" width="1.8" height="10" fill="#555"/><rect x="821.1" y="342" width="1.8" height="10" fill="#555"/><rect x="841.1" y="332" width="1.8" height="20" fill="#555"/><rect x="861.1" y="342" width="1.8" height="10" fill="#555"/><rect x="881.1" y="342" width="1.8" height="10" fill="#555"/><rect x="901.1" y="342" width="1.8" height="10" fill="#555"/><rect x="921.1" y="342" width="1.8" height="10" fill="#555"/><rect x="941.1" y="342" width="1.8" height="10" fill="#555"/><rect x="961.1" y="322" width="1.8" height="30" fill="#555"/><text x="966.5" y="332" font-family="Liberation Sans" font-size="16" fill="#222">2</text><rect x="981.1" y="342" width="1.8" height="10" fill="#555"/><rect x="1001.1" y="342" width="1.8" height="10" fill="#555"/><rect x="1021.1" y="342" width="1.8" height="10" fill="#555"/><rect x="1041.1" y="342" width="1.8" height="10" fill="#555"/><rect x="1061.1" y="342" width="1.8" height="10" fill="#555"/><rect x="1081.1" y="332" width="1.8" height="20" fill="#555"/><rect x="1101.1" y="342" width="1.8" height="10" fill="#555"/><rect x="1121.1" y="342" width="1.8" height="10" fill="#555"/><rect x="1141.1" y="342" width="1.8" height="10" fill="#555"/><rect x="1161.1" y="342" width="1.8" height="10" fill="#555"/><rect x="1181.1" y="342" width="1.8" height="10" fill="#555"/><rect x="1201.1" y="322" width="1.8" height="30" fill="#555"/><text x="1206.5" y="332" font-family="Liberation Sans" font-size="16" fill="#222">4</text><rect x="1221.1" y="342" width="1.8" height="10" fill="#555"/><rect x="1241.1" y="342" width="1.8" height="10" fill="#555"/><rect x="1261.1" y="342" width="1.8" height="10" fill="#555"/><rect x="1281.1" y="342" width="1.8" height="10" fill="#555"/><rect x="1301.1" y="342" width="1.8" height="10" fill="#555"/><rect x="1321.1" y="332" width="1.8" height="20" fill="#555"/><rect x="1341.1" y="342" width="1.8" height="10" fill="#555"/><rect x="1361.1" y="342" width="1.8" height="10" fill="#555"/><rect x="1381.1" y="342" width="1.8" height="10" fill="#555"/><rect x="1401.1" y="342" width="1.8" height="10" fill="#555"/><rect x="1421.1" y="342" width="1.8" height="10" fill="#555"/><rect x="1441.1" y="322" width="1.8" height="30" fill="#555"/><text x="1446.5" y="332" font-family="Liberation Sans" font-size="16" fill="#222">6</text><rect x="1461.1" y="342" width="1.8" height="10" fill="#555"/><rect x="1481.1" y="342" width="1.8" height="10" fill="#555"/><rect x="1501.1" y="342" width="1.8" height="10" fill="#555"/><rect x="1521.1" y="342" width="1.8" height="10" fill="#555"/><rect x="1541.1" y="342" width="1.8" height="10" fill="#555"/><rect x="1561.1" y="332" width="1.8" height="20" fill="#555"/><rect x="1581.1" y="342" width="1.8" height="10" fill="#555"/><rect x="1601.1" y="342" width="1.8" height="10" fill="#555"/><rect x="1621.1" y="342" width="1.8" height="10" fill="#555"/><rect x="1641.1" y="342" width="1.8" height="10" fill="#555"/><rect x="1661.1" y="342" width="1.8" height="10" fill="#555"/><rect x="1681.1" y="322" width="1.8" height="30" fill="#555"/><text x="1686.5" y="332" font-family="Liberation Sans" font-size="16" fill="#222">8</text><rect x="1701.1" y="342" width="1.8" height="10" fill="#555"/><rect x="1721.1" y="342" width="1.8" height="10" fill="#555"/><rect x="1741.1" y="342" width="1.8" height="10" fill="#555"/><rect x="1761.1" y="342" width="1.8" height="10" fill="#555"/><rect x="1781.1" y="342" width="1.8" height="10" fill="#555"/><rect x="1801.1" y="332" width="1.8" height="20" fill="#555"/><rect x="1821.1" y="342" width="1.8" height="10" fill="#555"/><rect x="1841.1" y="342" width="1.8" height="10" fill="#555"/><rect x="1861.1" y="342" width="1.8" height="10" fill="#555"/><rect x="1881.1" y="342" width="1.8" height="10" fill="#555"/><rect x="1901.1" y="342" width="1.8" height="10" fill="#555"/><rect x="1921.1" y="322" width="1.8" height="30" fill="#555"/><text x="1926.5" y="332" font-family="Liberation Sans" font-size="16" fill="#222">10</text><rect x="1941.1" y="342" width="1.8" height="10" fill="#555"/><rect x="1961.1" y="342" width="1.8" height="10" fill="#555"/><rect x="1981.1" y="342" width="1.8" height="10" fill="#555"/><rect x="2001.1" y="342" width="1.8" height="10" fill="#555"/><rect x="2021.1" y="342" width="1.8" height="10" fill="#555"/><rect x="2041.1" y="332" width="1.8" height="20" fill="#555"/><rect x="2061.1" y="342" width="1.8" height="10" fill="#555"/><rect x="2081.1" y="342" width="1.8" height="10" fill="#555"/><rect x="2101.1" y="342" width="1.8" height="10" fill="#555"/><rect x="2121.1" y="342" width="1.8" height="10" fill="#555"/><rect x="2141.1" y="342" width="1.8" height="10" fill="#555"/><rect x="2161.1" y="322" width="1.8" height="30" fill="#555"/><text x="2166.5" y="332" font-family="Liberation Sans" font-size="16" fill="#222">12</text><rect x="2181.1" y="342" width="1.8" height="10" fill="#555"/><rect x="2201.1" y="342" width="1.8" height="10" fill="#555"/><rect x="2221.1" y="342" width="1.8" height="10" fill="#555"/><rect x="2241.1" y="342" width="1.8" height="10" fill="#555"/><rect x="2261.1" y="342" width="1.8" height="10" fill="#555"/><rect x="2281.1" y="332" width="1.8" height="20" fill="#555"/><rect x="2301.1" y="342" width="1.8" height="10" fill="#555"/><rect x="2321.1" y="342" width="1.8" height="10" fill="#555"/><rect x="2341.1" y="342" width="1.8" height="10" fill="#555"/><rect x="2361.1" y="342" width="1.8" height="10" fill="#555"/><rect x="2381.1" y="342" width="1.8" height="10" fill="#555"/><rect x="2401.1" y="322" width="1.8" height="30" fill="#555"/><text x="2406.5" y="332" font-family="Liberation Sans" font-size="16" fill="#222">14</text><rect x="2421.1" y="342" width="1.8" height="10" fill="#555"/><rect x="2441.1" y="342" width="1.8" height="10" fill="#555"/><rect x="2461.1" y="342" width="1.8" height="10" fill="#555"/><rect x="2481.1" y="342" width="1.8" height="10" fill="#555"/><rect x="2501.1" y="342" width="1.8" height="10" fill="#555"/><rect x="2521.1" y="332" width="1.8" height="20" fill="#555"/><rect x="2541.1" y="342" width="1.8" height="10" fill="#555"/><rect x="2561.1" y="342" width="1.8" height="10" fill="#555"/><rect x="2581.1" y="342" width="1.8" height="10" fill="#555"/><rect x="712" y="367.1" width="10" height="1.8" fill="#555"/><rect x="712" y="387.1" width="10" height="1.8" fill="#555"/><rect x="712" y="407.1" width="10" height="1.8" fill="#555"/><rect x="712" y="427.1" width="10" height="1.8" fill="#555"/><rect x="702" y="447.1" width="20" height="1.8" fill="#555"/><rect x="712" y="467.1" width="10" height="1.8" fill="#555"/><rect x="712" y="487.1" width="10" height="1.8" fill="#555"/><rect x="712" y="507.1" width="10" height="1.8" fill="#555"/><rect x="712" y="527.1" width="10" height="1.8" fill="#555"/><rect x="712" y="547.1" width="10" height="1.8" fill="#555"/><rect x="692" y="567.1" width="30" height="1.8" fill="#555"/><text x="688" y="590" font-family="Liberation Sans" font-size="16" fill="#222">4</text><rect x="712" y="587.1" width="10" height="1.8" fill="#555"/><rect x="712" y="607.1" width="10" height="1.8" fill="#555"/><rect x="712" y="627.1" width="10" height="1.8" fill="#555"/><rect x="712" y="647.1" width="10" height="1.8" fill="#555"/><rect x="712" y="667.1" width="10" height="1.8" fill="#555"/><rect x="702" y="687.1" width="20" height="1.8" fill="#555"/><rect x="712" y="707.1" width="10" height="1.8" fill="#555"/><rect x="712" y="727.1" width="10" height="1.8" fill="#555"/><rect x="712" y="747.1" width="10" height="1.8" fill="#555"/><rect x="712" y="767.1" width="10" height="1.8" fill="#555"/><rect x="712" y="787.1" width="10" height="1.8" fill="#555"/><rect x="692" y="807.1" width="30" height="1.8" fill="#555"/><text x="688" y="830" font-family="Liberation Sans" font-size="16" fill="#222">6</text><rect x="712" y="827.1" width="10" height="1.8" fill="#555"/><rect x="712" y="847.1" width="10" height="1.8" fill="#555"/><rect x="712" y="867.1" width="10" height="1.8" fill="#555"/><rect x="712" y="887.1" width="10" height="1.8" fill="#555"/><rect x="712" y="907.1" width="10" height="1.8" fill="#555"/><rect x="702" y="927.1" width="20" height="1.8" fill="#555"/><rect x="712" y="947.1" width="10" height="1.8" fill="#555"/><rect x="712" y="967.1" width="10" height="1.8" fill="#555"/><rect x="712" y="987.1" width="10" height="1.8" fill="#555"/><rect x="712" y="1007.1" width="10" height="1.8" fill="#555"/><rect x="712" y="1027.1" width="10" height="1.8" fill="#555"/><rect x="692" y="1047.1" width="30" height="1.8" fill="#555"/><text x="688" y="1070" font-family="Liberation Sans" font-size="16" fill="#222">8</text><rect x="712" y="1067.1" width="10" height="1.8" fill="#555"/><rect x="712" y="1087.1" width="10" height="1.8" fill="#555"/><rect x="712" y="1107.1" width="10" height="1.8" fill="#555"/><rect x="712" y="1127.1" width="10" height="1.8" fill="#555"/><rect x="712" y="1147.1" width="10" height="1.8" fill="#555"/><rect x="702" y="1167.1" width="20" height="1.8" fill="#555"/><rect x="712" y="1187.1" width="10" height="1.8" fill="#555"/><rect x="712" y="1207.1" width="10" height="1.8" fill="#555"/><rect x="712" y="1227.1" width="10" height="1.8" fill="#555"/><rect x="712" y="1247.1" width="10" height="1.8" fill="#555"/><rect x="712" y="1267.1" width="10" height="1.8" fill="#555"/><rect x="692" y="1287.1" width="30" height="1.8" fill="#555"/><text x="688" y="1310" font-family="Liberation Sans" font-size="16" fill="#222">10</text><rect x="712" y="1307.1" width="10" height="1.8" fill="#555"/><rect x="712" y="1327.1" width="10" height="1.8" fill="#555"/><rect x="712" y="1347.1" width="10" height="1.8" fill="#555"/><rect x="712" y="1367.1" width="10" height="1.8" fill="#555"/><rect x="712" y="1387.1" width="10" height="1.8" fill="#555"/><rect x="702" y="1407.1" width="20" height="1.8" fill="#555"/><rect x="712" y="1427.1" width="10" height="1.8" fill="#555"/><rect x="712" y="1447.1" width="10" height="1.8" fill="#555"/><rect x="712" y="1467.1" width="10" height="1.8" fill="#555"/><rect x="712" y="1487.1" width="10" height="1.8" fill="#555"/><rect x="712" y="1507.1" width="10" height="1.8" fill="#555"/><rect x="692" y="1527.1" width="30" height="1.8" fill="#555"/><text x="688" y="1550" font-family="Liberation Sans" font-size="16" fill="#222">12</text><rect x="712" y="1547.1" width="10" height="1.8" fill="#555"/><rect x="712" y="1567.1" width="10" height="1.8" fill="#555"/><rect x="1442" y="508.5" width="948" height="11.5" fill="#424242"/><rect x="1442" y="1444.5" width="948" height="11.5" fill="#424242"/><rect x="1442" y="508.5" width="11.3" height="947.5" fill="#424242"/><rect x="2378.7" y="508.5" width="11.3" height="947.5" fill="#424242"/><rect x="1910.4" y="508.5" width="11.4" height="947.5" fill="#424242"/><rect x="1442" y="648.5" width="948" height="11.5" fill="#424242"/><rect x="1442" y="784" width="948" height="11.5" fill="#424242"/><rect x="1442" y="919" width="948" height="11.5" fill="#424242"/><rect x="1442" y="1054.5" width="948" height="11.5" fill="#424242"/><rect x="1442" y="1190.2" width="948" height="11.5" fill="#424242"/><rect x="1442" y="1327" width="948" height="11.5" fill="#424242"/><path d="M1501.49 545.1 V536.98 Q1501.49 533.5 1507.85 533.5 H1520.57 V545.1 Z" fill="#878787" stroke="#111" stroke-width="1.4"/><path d="M1497.515 559.6 V548.0 Q1497.515 545.1 1499.9 545.1 H1522.16 Q1524.545 545.1 1524.545 548.0 V559.6 Z" fill="#878787" stroke="#111" stroke-width="1.4"/><path d="M1497.515 559.6 Q1495.13 564.82 1489.565 570.62 Q1484.795 576.42 1484.795 585.7 L1484.0 635.58 Q1484.0 648.34 1491.95 648.92 Q1523.75 650.66 1555.55 648.92 Q1563.5 648.34 1563.5 637.9 L1561.115 588.02 Q1561.91 571.78 1549.985 567.72 L1531.7 564.24 Q1526.135 562.5 1524.545 559.6 Z" fill="#d93033" stroke="#111" stroke-width="1.4"/><path d="M1527.725 574.68 Q1527.725 571.2 1533.29 571.78 Q1552.37 574.1 1553.165 585.7 L1552.37 603.1 Q1551.575 607.74 1549.19 603.1 Q1546.01 591.5 1541.24 584.54 Q1527.725 577.58 1527.725 574.68 Z" fill="#fff" stroke="#111" stroke-width="1.4"/><path d="M1601.19 545.1 V536.98 Q1601.19 533.5 1607.55 533.5 H1620.27 V545.1 Z" fill="#878787" stroke="#111" stroke-width="1.4"/><path d="M1597.2150000000001 559.6 V548.0 Q1597.2150000000001 545.1 1599.6000000000001 545.1 H1621.8600000000001 Q1624.2450000000001 545.1 1624.2450000000001 548.0 V559.6 Z" fill="#878787" stroke="#111" stroke-width="1.4"/><path d="M1597.2150000000001 559.6 Q1594.8300000000002 564.82 1589.265 570.62 Q1584.4950000000001 576.42 1584.4950000000001 585.7 L1583.7 635.58 Q1583.7 648.34 1591.65 648.92 Q1623.45 650.66 1655.25 648.92 Q1663.2 648.34 1663.2 637.9 L1660.815 588.02 Q1661.6100000000001 571.78 1649.685 567.72 L1631.4 564.24 Q1625.835 562.5 1624.2450000000001 559.6 Z" fill="#d93033" stroke="#111" stroke-width="1.4"/><path d="M1627.425 574.68 Q1627.425 571.2 1632.99 571.78 Q1652.0700000000002 574.1 1652.865 585.7 L1652.0700000000002 603.1 Q1651.275 607.74 1648.89 603.1 Q1645.71 591.5 1640.94 584.54 Q1627.425 577.58 1627.425 574.68 Z" fill="#fff" stroke="#111" stroke-width="1.4"/><path d="M1699.49 545.1 V536.98 Q1699.49 533.5 1705.85 533.5 H1718.57 V545.1 Z" fill="#878787" stroke="#111" stroke-width="1.4"/><path d="M1695.515 559.6 V548.0 Q1695.515 545.1 1697.9 545.1 H1720.16 Q1722.545 545.1 1722.545 548.0 V559.6 Z" fill="#878787" stroke="#111" stroke-width="1.4"/><path d="M1695.515 559.6 Q1693.13 564.82 1687.565 570.62 Q1682.795 576.42 1682.795 585.7 L1682.0 635.58 Q1682.0 648.34 1689.95 648.92 Q1721.75 650.66 1753.55 648.92 Q1761.5 648.34 1761.5 637.9 L1759.115 588.02 Q1759.91 571.78 1747.985 567.72 L1729.7 564.24 Q1724.135 562.5 1722.545 559.6 Z" fill="#d93033" stroke="#111" stroke-width="1.4"/><path d="M1725.725 574.68 Q1725.725 571.2 1731.29 571.78 Q1750.37 574.1 1751.165 585.7 L1750.37 603.1 Q1749.575 607.74 1747.19 603.1 Q1744.01 591.5 1739.24 584.54 Q1725.725 577.58 1725.725 574.68 Z" fill="#fff" stroke="#111" stroke-width="1.4"/><path d="M1804.19 545.1 V536.98 Q1804.19 533.5 1810.55 533.5 H1823.27 V545.1 Z" fill="#878787" stroke="#111" stroke-width="1.4"/><path d="M1800.2150000000001 559.6 V548.0 Q1800.2150000000001 545.1 1802.6000000000001 545.1 H1824.8600000000001 Q1827.2450000000001 545.1 1827.2450000000001 548.0 V559.6 Z" fill="#878787" stroke="#111" stroke-width="1.4"/><path d="M1800.2150000000001 559.6 Q1797.8300000000002 564.82 1792.265 570.62 Q1787.4950000000001 576.42 1787.4950000000001 585.7 L1786.7 635.58 Q1786.7 648.34 1794.65 648.92 Q1826.45 650.66 1858.25 648.92 Q1866.2 648.34 1866.2 637.9 L1863.815 588.02 Q1864.6100000000001 571.78 1852.685 567.72 L1834.4 564.24 Q1828.835 562.5 1827.2450000000001 559.6 Z" fill="#d93033" stroke="#111" stroke-width="1.4"/><path d="M1830.425 574.68 Q1830.425 571.2 1835.99 571.78 Q1855.0700000000002 574.1 1855.865 585.7 L1855.0700000000002 603.1 Q1854.275 607.74 1851.89 603.1 Q1848.71 591.5 1843.94 584.54 Q1830.425 577.58 1830.425 574.68 Z" fill="#fff" stroke="#111" stroke-width="1.4"/><path d="M1557.32 664.3 H1579.63 Q1596.605 666.68 1600.0 678.5799999999999 Q1600.0 680.365 1598.545 680.365 H1581.085 V682.745 H1569.445 L1565.08 671.202 H1557.32 Z" fill="#878787" stroke="#111" stroke-width="1.4"/><rect x="1551.5" y="664.3" width="6.790000000000001" height="6.902" rx="2" fill="#878787" stroke="#111" stroke-width="1.4"/><path d="M1563.14 671.202 Q1559.745 688.0999999999999 1552.47 693.4549999999999 Q1563.625 691.67 1568.96 677.39 Z" fill="#878787" stroke="#111" stroke-width="1.4"/><rect x="1570.415" y="682.745" width="14.065" height="7.854" rx="2.5" fill="#878787" stroke="#111" stroke-width="1.4"/><path d="M1571.87 690.5989999999999 Q1571.87 707.14 1568.96 715.4699999999999 Q1552.47 740.4599999999999 1553.44 757.12 Q1553.44 771.4 1556.35 783.3 H1596.12 Q1599.515 771.4 1599.515 752.3599999999999 Q1598.545 729.75 1587.875 703.5699999999999 Q1583.995 694.05 1583.51 690.5989999999999 Z" fill="#33c3d6" stroke="#111" stroke-width="1.4"/><path d="M1627.02 664.3 H1649.3300000000002 Q1666.305 666.68 1669.7 678.5799999999999 Q1669.7 680.365 1668.2450000000001 680.365 H1650.785 V682.745 H1639.145 L1634.78 671.202 H1627.02 Z" fill="#878787" stroke="#111" stroke-width="1.4"/><rect x="1621.2" y="664.3" width="6.790000000000001" height="6.902" rx="2" fill="#878787" stroke="#111" stroke-width="1.4"/><path d="M1632.8400000000001 671.202 Q1629.445 688.0999999999999 1622.17 693.4549999999999 Q1633.325 691.67 1638.66 677.39 Z" fill="#878787" stroke="#111" stroke-width="1.4"/><rect x="1640.115" y="682.745" width="14.065" height="7.854" rx="2.5" fill="#878787" stroke="#111" stroke-width="1.4"/><path d="M1641.57 690.5989999999999 Q1641.57 707.14 1638.66 715.4699999999999 Q1622.17 740.4599999999999 1623.14 757.12 Q1623.14 771.4 1626.05 783.3 H1665.8200000000002 Q1669.2150000000001 771.4 1669.2150000000001 752.3599999999999 Q1668.2450000000001 729.75 1657.575 703.5699999999999 Q1653.6950000000002 694.05 1653.21 690.5989999999999 Z" fill="#33c3d6" stroke="#111" stroke-width="1.4"/><rect x="1731.1299999999999" y="694.2" width="31.84" height="3.5279999999999974" fill="#bdbdbd" stroke="#111" stroke-width="1.3"/><path d="M1699.29 710.9580000000001 L1714.215 697.7280000000001 Q1716.205 696.846 1720.185 696.846 H1776.8999999999999 Q1779.885 696.846 1781.875 697.7280000000001 L1794.81 710.9580000000001 L1781.875 722.7180000000001 Q1779.885 723.6 1776.8999999999999 723.6 H1720.185 Q1716.205 723.6 1714.215 722.7180000000001 Z" fill="#cecece" stroke="#111" stroke-width="1.3"/><path d="M1697.3 710.9580000000001 L1706.2549999999999 708.9000000000001 L1706.2549999999999 713.0160000000001 Z M1796.8 710.9580000000001 L1787.845 708.9000000000001 L1787.845 713.0160000000001 Z" fill="#555" stroke="#111" stroke-width="1"/><path d="M1707.7475 710.9580000000001 L1716.205 701.5500000000001 V720.072 Z M1786.3525 710.9580000000001 L1777.895 701.5500000000001 V720.072 Z" fill="#6a6a6a" stroke="#111" stroke-width="1"/><path d="M1716.205 710.37 H1777.895" stroke="#333" stroke-width="2.2"/><rect x="1731.1299999999999" y="724.8" width="31.84" height="3.3840000000000052" fill="#bdbdbd" stroke="#111" stroke-width="1.3"/><path d="M1699.29 740.874 L1714.215 728.184 Q1716.205 727.338 1720.185 727.338 H1776.8999999999999 Q1779.885 727.338 1781.875 728.184 L1794.81 740.874 L1781.875 752.154 Q1779.885 753.0 1776.8999999999999 753.0 H1720.185 Q1716.205 753.0 1714.215 752.154 Z" fill="#cecece" stroke="#111" stroke-width="1.3"/><path d="M1697.3 740.874 L1706.2549999999999 738.9 L1706.2549999999999 742.848 Z M1796.8 740.874 L1787.845 738.9 L1787.845 742.848 Z" fill="#555" stroke="#111" stroke-width="1"/><path d="M1707.7475 740.874 L1716.205 731.8499999999999 V749.616 Z M1786.3525 740.874 L1777.895 731.8499999999999 V749.616 Z" fill="#6a6a6a" stroke="#111" stroke-width="1"/><path d="M1716.205 740.31 H1777.895" stroke="#333" stroke-width="2.2"/><rect x="1731.1299999999999" y="754.5" width="31.84" height="3.4559999999999946" fill="#bdbdbd" stroke="#111" stroke-width="1.3"/><path d="M1699.29 770.9159999999999 L1714.215 757.956 Q1716.205 757.092 1720.185 757.092 H1776.8999999999999 Q1779.885 757.092 1781.875 757.956 L1794.81 770.9159999999999 L1781.875 782.4359999999999 Q1779.885 783.3 1776.8999999999999 783.3 H1720.185 Q1716.205 783.3 1714.215 782.4359999999999 Z" fill="#cecece" stroke="#111" stroke-width="1.3"/><path d="M1697.3 770.9159999999999 L1706.2549999999999 768.9 L1706.2549999999999 772.932 Z M1796.8 770.9159999999999 L1787.845 768.9 L1787.845 772.932 Z" fill="#555" stroke="#111" stroke-width="1"/><path d="M1707.7475 770.9159999999999 L1716.205 761.7 V779.8439999999999 Z M1786.3525 770.9159999999999 L1777.895 761.7 V779.8439999999999 Z" fill="#6a6a6a" stroke="#111" stroke-width="1"/><path d="M1716.205 770.34 H1777.895" stroke="#333" stroke-width="2.2"/><rect x="1835.33" y="694.2" width="31.84" height="3.5279999999999974" fill="#bdbdbd" stroke="#111" stroke-width="1.3"/><path d="M1803.49 710.9580000000001 L1818.415 697.7280000000001 Q1820.405 696.846 1824.385 696.846 H1881.1 Q1884.085 696.846 1886.075 697.7280000000001 L1899.01 710.9580000000001 L1886.075 722.7180000000001 Q1884.085 723.6 1881.1 723.6 H1824.385 Q1820.405 723.6 1818.415 722.7180000000001 Z" fill="#cecece" stroke="#111" stroke-width="1.3"/><path d="M1801.5 710.9580000000001 L1810.455 708.9000000000001 L1810.455 713.0160000000001 Z M1901.0 710.9580000000001 L1892.045 708.9000000000001 L1892.045 713.0160000000001 Z" fill="#555" stroke="#111" stroke-width="1"/><path d="M1811.9475 710.9580000000001 L1820.405 701.5500000000001 V720.072 Z M1890.5525 710.9580000000001 L1882.095 701.5500000000001 V720.072 Z" fill="#6a6a6a" stroke="#111" stroke-width="1"/><path d="M1820.405 710.37 H1882.095" stroke="#333" stroke-width="2.2"/><rect x="1835.33" y="724.8" width="31.84" height="3.3840000000000052" fill="#bdbdbd" stroke="#111" stroke-width="1.3"/><path d="M1803.49 740.874 L1818.415 728.184 Q1820.405 727.338 1824.385 727.338 H1881.1 Q1884.085 727.338 1886.075 728.184 L1899.01 740.874 L1886.075 752.154 Q1884.085 753.0 1881.1 753.0 H1824.385 Q1820.405 753.0 1818.415 752.154 Z" fill="#cecece" stroke="#111" stroke-width="1.3"/><path d="M1801.5 740.874 L1810.455 738.9 L1810.455 742.848 Z M1901.0 740.874 L1892.045 738.9 L1892.045 742.848 Z" fill="#555" stroke="#111" stroke-width="1"/><path d="M1811.9475 740.874 L1820.405 731.8499999999999 V749.616 Z M1890.5525 740.874 L1882.095 731.8499999999999 V749.616 Z" fill="#6a6a6a" stroke="#111" stroke-width="1"/><path d="M1820.405 740.31 H1882.095" stroke="#333" stroke-width="2.2"/><rect x="1835.33" y="754.5" width="31.84" height="3.4559999999999946" fill="#bdbdbd" stroke="#111" stroke-width="1.3"/><path d="M1803.49 770.9159999999999 L1818.415 757.956 Q1820.405 757.092 1824.385 757.092 H1881.1 Q1884.085 757.092 1886.075 757.956 L1899.01 770.9159999999999 L1886.075 782.4359999999999 Q1884.085 783.3 1881.1 783.3 H1824.385 Q1820.405 783.3 1818.415 782.4359999999999 Z" fill="#cecece" stroke="#111" stroke-width="1.3"/><path d="M1801.5 770.9159999999999 L1810.455 768.9 L1810.455 772.932 Z M1901.0 770.9159999999999 L1892.045 768.9 L1892.045 772.932 Z" fill="#555" stroke="#111" stroke-width="1"/><path d="M1811.9475 770.9159999999999 L1820.405 761.7 V779.8439999999999 Z M1890.5525 770.9159999999999 L1882.095 761.7 V779.8439999999999 Z" fill="#6a6a6a" stroke="#111" stroke-width="1"/><path d="M1820.405 770.34 H1882.095" stroke="#333" stroke-width="2.2"/><rect x="1483.5" y="851.0" width="63.0" height="13.015" rx="3" fill="#878787" stroke="#111" stroke-width="1.4"/><rect x="1480" y="864.015" width="70" height="55.48500000000001" rx="14.0" fill="#cc88e8" stroke="#111" stroke-width="1.4"/><rect x="1494.0" y="880.455" width="42.0" height="29.455" fill="#fff" stroke="#111" stroke-width="1.4"/><rect x="1582.5" y="851.0" width="63.0" height="13.015" rx="3" fill="#878787" stroke="#111" stroke-width="1.4"/><rect x="1579" y="864.015" width="70" height="55.48500000000001" rx="14.0" fill="#cc88e8" stroke="#111" stroke-width="1.4"/><rect x="1593.0" y="880.455" width="42.0" height="29.455" fill="#fff" stroke="#111" stroke-width="1.4"/><rect x="1690.83" y="811.0" width="50.93999999999992" height="14.6475" rx="3" fill="#878787" stroke="#111" stroke-width="1.4"/><rect x="1688.0" y="825.6475" width="56.59999999999991" height="93.85249999999999" rx="11.319999999999983" fill="#a530d6" stroke="#111" stroke-width="1.4"/><rect x="1691.962" y="856.57" width="48.675999999999924" height="8.1375" fill="#fff" stroke="#111" stroke-width="1.4"/><rect x="1691.962" y="871.2175" width="48.675999999999924" height="27.125" fill="#fff" stroke="#111" stroke-width="1.4"/><rect x="1763.83" y="811.0" width="50.93999999999992" height="14.6475" rx="3" fill="#878787" stroke="#111" stroke-width="1.4"/><rect x="1761.0" y="825.6475" width="56.59999999999991" height="93.85249999999999" rx="11.319999999999983" fill="#a530d6" stroke="#111" stroke-width="1.4"/><rect x="1764.962" y="856.57" width="48.675999999999924" height="8.1375" fill="#fff" stroke="#111" stroke-width="1.4"/><rect x="1764.962" y="871.2175" width="48.675999999999924" height="27.125" fill="#fff" stroke="#111" stroke-width="1.4"/><rect x="1840.4299999999998" y="811.0" width="50.93999999999992" height="14.6475" rx="3" fill="#878787" stroke="#111" stroke-width="1.4"/><rect x="1837.6" y="825.6475" width="56.59999999999991" height="93.85249999999999" rx="11.319999999999983" fill="#a530d6" stroke="#111" stroke-width="1.4"/><rect x="1841.562" y="856.57" width="48.675999999999924" height="8.1375" fill="#fff" stroke="#111" stroke-width="1.4"/><rect x="1841.562" y="871.2175" width="48.675999999999924" height="27.125" fill="#fff" stroke="#111" stroke-width="1.4"/><path d="M1528.78 969.42 Q1531.9 965.0 1553.35 965.884 L1554.52 963.232 L1552.18 971.188 V976.492 H1544.38 V971.188 Q1531.9 970.304 1528.78 969.42 Z" fill="#878787" stroke="#111" stroke-width="1.2"/><rect x="1545.55" y="973.84" width="5.460000000000001" height="5.304000000000006" fill="#878787" stroke="#111" stroke-width="1"/><rect x="1542.43" y="979.144" width="11.7" height="4.862000000000005" fill="#878787" stroke="#111" stroke-width="1.1"/><rect x="1538.92" y="984.006" width="17.94" height="7.9560000000000075" fill="#878787" stroke="#111" stroke-width="1.4"/><path d="M1528 1049.864 V1009.2 Q1528 991.962 1538.92 991.962 H1556.08 Q1567 991.962 1567 1009.2 V1049.864 Q1567 1053.4 1563.88 1053.4 H1531.12 Q1528 1053.4 1528 1049.864 Z" fill="#f0cf1b" stroke="#111" stroke-width="1.4"/><path d="M1595.08 969.42 Q1598.2 965.0 1619.6499999999999 965.884 L1620.82 963.232 L1618.48 971.188 V976.492 H1610.68 V971.188 Q1598.2 970.304 1595.08 969.42 Z" fill="#878787" stroke="#111" stroke-width="1.2"/><rect x="1611.85" y="973.84" width="5.460000000000001" height="5.304000000000006" fill="#878787" stroke="#111" stroke-width="1"/><rect x="1608.73" y="979.144" width="11.7" height="4.862000000000005" fill="#878787" stroke="#111" stroke-width="1.1"/><rect x="1605.22" y="984.006" width="17.94" height="7.9560000000000075" fill="#878787" stroke="#111" stroke-width="1.4"/><path d="M1594.3 1049.864 V1009.2 Q1594.3 991.962 1605.22 991.962 H1622.3799999999999 Q1633.3 991.962 1633.3 1009.2 V1049.864 Q1633.3 1053.4 1630.18 1053.4 H1597.4199999999998 Q1594.3 1053.4 1594.3 1049.864 Z" fill="#f0cf1b" stroke="#111" stroke-width="1.4"/><path d="M1656.78 969.42 Q1659.9 965.0 1681.35 965.884 L1682.52 963.232 L1680.18 971.188 V976.492 H1672.38 V971.188 Q1659.9 970.304 1656.78 969.42 Z" fill="#878787" stroke="#111" stroke-width="1.2"/><rect x="1673.55" y="973.84" width="5.460000000000001" height="5.304000000000006" fill="#878787" stroke="#111" stroke-width="1"/><rect x="1670.43" y="979.144" width="11.7" height="4.862000000000005" fill="#878787" stroke="#111" stroke-width="1.1"/><rect x="1666.92" y="984.006" width="17.94" height="7.9560000000000075" fill="#878787" stroke="#111" stroke-width="1.4"/><path d="M1656 1049.864 V1009.2 Q1656 991.962 1666.92 991.962 H1684.08 Q1695 991.962 1695 1009.2 V1049.864 Q1695 1053.4 1691.88 1053.4 H1659.12 Q1656 1053.4 1656 1049.864 Z" fill="#f0cf1b" stroke="#111" stroke-width="1.4"/><path d="M1737 941.31 V1042.962 A29.75 10.637999999999995 0 0 0 1796.5 1042.962 V941.31 Z" fill="#e8e8e8" stroke="#111" stroke-width="1.3"/><ellipse cx="1766.75" cy="941.31" rx="29.75" ry="5.909999999999997" fill="#f3f3f3" stroke="#111" stroke-width="1.3"/><ellipse cx="1766.75" cy="941.31" rx="6.545" ry="2.2457999999999987" fill="#ddd" stroke="#333" stroke-width="1"/><path d="M1737 989.7719999999999 A29.75 10.401599999999993 0 0 0 1796.5 989.7719999999999" fill="none" stroke="#111" stroke-width="1.3"/><path d="M1825.2 941.31 V1042.962 A29.75 10.637999999999995 0 0 0 1884.7 1042.962 V941.31 Z" fill="#e8e8e8" stroke="#111" stroke-width="1.3"/><ellipse cx="1854.95" cy="941.31" rx="29.75" ry="5.909999999999997" fill="#f3f3f3" stroke="#111" stroke-width="1.3"/><ellipse cx="1854.95" cy="941.31" rx="6.545" ry="2.2457999999999987" fill="#ddd" stroke="#333" stroke-width="1"/><path d="M1825.2 989.7719999999999 A29.75 10.401599999999993 0 0 0 1884.7 989.7719999999999" fill="none" stroke="#111" stroke-width="1.3"/><rect x="1539.42" y="1178.521" width="17.16" height="11.67900000000001" fill="#555" stroke="#111" stroke-width="1"/><path d="M1540.98 1181.269 V1188.826 M1544.88 1181.269 V1188.826 M1548.78 1181.269 V1188.826 M1552.68 1181.269 V1188.826" stroke="#ddd" stroke-width="1.2"/><rect x="1538.64" y="1178.521" width="18.72" height="3.4350000000000023" fill="#eee" stroke="#111" stroke-width="1"/><path d="M1528.5 1129.4005 L1533.57 1176.46 Q1533.96 1178.521 1535.52 1178.521 H1560.48 Q1562.04 1178.521 1562.43 1176.46 L1567.5 1129.4005 Z" fill="#cfe583" stroke="#111" stroke-width="1.3"/><path d="M1531.62 1162.72 Q1548.0 1175.086 1564.38 1162.72" fill="none" stroke="#111" stroke-width="1.3"/><rect x="1527.72" y="1121.5" width="40.56" height="7.900500000000005" rx="3" fill="#f2f2f2" stroke="#111" stroke-width="1.3"/><rect x="1599.6200000000001" y="1178.521" width="17.16" height="11.67900000000001" fill="#555" stroke="#111" stroke-width="1"/><path d="M1601.18 1181.269 V1188.826 M1605.0800000000002 1181.269 V1188.826 M1608.98 1181.269 V1188.826 M1612.88 1181.269 V1188.826" stroke="#ddd" stroke-width="1.2"/><rect x="1598.8400000000001" y="1178.521" width="18.72" height="3.4350000000000023" fill="#eee" stroke="#111" stroke-width="1"/><path d="M1588.7 1129.4005 L1593.77 1176.46 Q1594.16 1178.521 1595.72 1178.521 H1620.68 Q1622.24 1178.521 1622.63 1176.46 L1627.7 1129.4005 Z" fill="#cfe583" stroke="#111" stroke-width="1.3"/><path d="M1591.82 1162.72 Q1608.2 1175.086 1624.5800000000002 1162.72" fill="none" stroke="#111" stroke-width="1.3"/><rect x="1587.92" y="1121.5" width="40.56" height="7.900500000000005" rx="3" fill="#f2f2f2" stroke="#111" stroke-width="1.3"/><rect x="1652.92" y="1178.521" width="17.16" height="11.67900000000001" fill="#555" stroke="#111" stroke-width="1"/><path d="M1654.48 1181.269 V1188.826 M1658.38 1181.269 V1188.826 M1662.28 1181.269 V1188.826 M1666.18 1181.269 V1188.826" stroke="#ddd" stroke-width="1.2"/><rect x="1652.14" y="1178.521" width="18.72" height="3.4350000000000023" fill="#eee" stroke="#111" stroke-width="1"/><path d="M1642.0 1129.4005 L1647.07 1176.46 Q1647.46 1178.521 1649.02 1178.521 H1673.98 Q1675.54 1178.521 1675.93 1176.46 L1681.0 1129.4005 Z" fill="#cfe583" stroke="#111" stroke-width="1.3"/><path d="M1645.12 1162.72 Q1661.5 1175.086 1677.88 1162.72" fill="none" stroke="#111" stroke-width="1.3"/><rect x="1641.22" y="1121.5" width="40.56" height="7.900500000000005" rx="3" fill="#f2f2f2" stroke="#111" stroke-width="1.3"/><rect x="1721.2199999999998" y="1071.4" width="11.76" height="5.939999999999998" fill="#878787" stroke="#111" stroke-width="1.2"/><rect x="1719.26" y="1077.3400000000001" width="15.68" height="7.721999999999997" fill="#878787" stroke="#111" stroke-width="1.4"/><path d="M1719.26 1085.0620000000001 Q1707.5 1091.596 1707.5 1107.04 Q1707.5 1118.92 1713.3799999999999 1130.8000000000002 Q1702.6 1152.184 1702.6 1164.064 V1186.636 Q1727.1 1192.576 1751.6 1186.636 V1164.064 Q1751.6 1152.184 1740.82 1130.8000000000002 Q1746.6999999999998 1118.92 1746.6999999999998 1107.04 Q1746.6999999999998 1091.596 1734.9399999999998 1085.0620000000001 Z" fill="#ff8a0d" stroke="#111" stroke-width="1.4"/><rect x="1790.82" y="1071.4" width="11.76" height="5.939999999999998" fill="#878787" stroke="#111" stroke-width="1.2"/><rect x="1788.8600000000001" y="1077.3400000000001" width="15.68" height="7.721999999999997" fill="#878787" stroke="#111" stroke-width="1.4"/><path d="M1788.8600000000001 1085.0620000000001 Q1777.1000000000001 1091.596 1777.1000000000001 1107.04 Q1777.1000000000001 1118.92 1782.98 1130.8000000000002 Q1772.2 1152.184 1772.2 1164.064 V1186.636 Q1796.7 1192.576 1821.2 1186.636 V1164.064 Q1821.2 1152.184 1810.42 1130.8000000000002 Q1816.3 1118.92 1816.3 1107.04 Q1816.3 1091.596 1804.54 1085.0620000000001 Z" fill="#ff8a0d" stroke="#111" stroke-width="1.4"/><rect x="1859.82" y="1071.4" width="11.76" height="5.939999999999998" fill="#878787" stroke="#111" stroke-width="1.2"/><rect x="1857.8600000000001" y="1077.3400000000001" width="15.68" height="7.721999999999997" fill="#878787" stroke="#111" stroke-width="1.4"/><path d="M1857.8600000000001 1085.0620000000001 Q1846.1000000000001 1091.596 1846.1000000000001 1107.04 Q1846.1000000000001 1118.92 1851.98 1130.8000000000002 Q1841.2 1152.184 1841.2 1164.064 V1186.636 Q1865.7 1192.576 1890.2 1186.636 V1164.064 Q1890.2 1152.184 1879.42 1130.8000000000002 Q1885.3 1118.92 1885.3 1107.04 Q1885.3 1091.596 1873.54 1085.0620000000001 Z" fill="#ff8a0d" stroke="#111" stroke-width="1.4"/><path d="M1470.0 1249.742 V1320.932 Q1490.9 1326.017 1511.8 1320.932 V1249.742 Z" fill="#83ade3" stroke="#111" stroke-width="1.6"/><path d="M1469.164 1244.657 H1512.636 V1249.742 Q1490.9 1253.81 1469.164 1249.742 Z" fill="#6e6e6e" stroke="#111" stroke-width="1.6"/><path d="M1470.0 1227.368 V1244.657 Q1490.9 1248.725 1511.8 1244.657 V1227.368 Z" fill="#878787" stroke="#111" stroke-width="1.6"/><ellipse cx="1490.9" cy="1227.368" rx="20.899999999999977" ry="4.068000000000002" fill="#878787" stroke="#111" stroke-width="1.6"/><path d="M1530.6 1249.742 V1320.932 Q1551.5 1326.017 1572.3999999999999 1320.932 V1249.742 Z" fill="#83ade3" stroke="#111" stroke-width="1.6"/><path d="M1529.764 1244.657 H1573.2359999999999 V1249.742 Q1551.5 1253.81 1529.764 1249.742 Z" fill="#6e6e6e" stroke="#111" stroke-width="1.6"/><path d="M1530.6 1227.368 V1244.657 Q1551.5 1248.725 1572.3999999999999 1244.657 V1227.368 Z" fill="#878787" stroke="#111" stroke-width="1.6"/><ellipse cx="1551.5" cy="1227.368" rx="20.899999999999977" ry="4.068000000000002" fill="#878787" stroke="#111" stroke-width="1.6"/><path d="M1589.3 1249.742 V1320.932 Q1610.1999999999998 1326.017 1631.1 1320.932 V1249.742 Z" fill="#83ade3" stroke="#111" stroke-width="1.6"/><path d="M1588.464 1244.657 H1631.936 V1249.742 Q1610.1999999999998 1253.81 1588.464 1249.742 Z" fill="#6e6e6e" stroke="#111" stroke-width="1.6"/><path d="M1589.3 1227.368 V1244.657 Q1610.1999999999998 1248.725 1631.1 1244.657 V1227.368 Z" fill="#878787" stroke="#111" stroke-width="1.6"/><ellipse cx="1610.1999999999998" cy="1227.368" rx="20.899999999999977" ry="4.068000000000002" fill="#878787" stroke="#111" stroke-width="1.6"/><path d="M1647.2 1249.742 V1320.932 Q1668.1 1326.017 1689.0 1320.932 V1249.742 Z" fill="#83ade3" stroke="#111" stroke-width="1.6"/><path d="M1646.364 1244.657 H1689.836 V1249.742 Q1668.1 1253.81 1646.364 1249.742 Z" fill="#6e6e6e" stroke="#111" stroke-width="1.6"/><path d="M1647.2 1227.368 V1244.657 Q1668.1 1248.725 1689.0 1244.657 V1227.368 Z" fill="#878787" stroke="#111" stroke-width="1.6"/><ellipse cx="1668.1" cy="1227.368" rx="20.899999999999977" ry="4.068000000000002" fill="#878787" stroke="#111" stroke-width="1.6"/><path d="M1724.1 1278.406 V1326.076 Q1738.1 1329.481 1752.1 1326.076 V1278.406 Z" fill="#2160a5" stroke="#111" stroke-width="1.6"/><path d="M1723.54 1275.001 H1752.6599999999999 V1278.406 Q1738.1 1281.13 1723.54 1278.406 Z" fill="#6e6e6e" stroke="#111" stroke-width="1.6"/><path d="M1724.1 1263.424 V1275.001 Q1738.1 1277.725 1752.1 1275.001 V1263.424 Z" fill="#878787" stroke="#111" stroke-width="1.6"/><ellipse cx="1738.1" cy="1263.424" rx="14.0" ry="2.723999999999996" fill="#878787" stroke="#111" stroke-width="1.6"/><path d="M1768 1278.406 V1326.076 Q1782.0 1329.481 1796 1326.076 V1278.406 Z" fill="#2160a5" stroke="#111" stroke-width="1.6"/><path d="M1767.44 1275.001 H1796.56 V1278.406 Q1782.0 1281.13 1767.44 1278.406 Z" fill="#6e6e6e" stroke="#111" stroke-width="1.6"/><path d="M1768 1263.424 V1275.001 Q1782.0 1277.725 1796 1275.001 V1263.424 Z" fill="#878787" stroke="#111" stroke-width="1.6"/><ellipse cx="1782.0" cy="1263.424" rx="14.0" ry="2.723999999999996" fill="#878787" stroke="#111" stroke-width="1.6"/><path d="M1811.5 1278.406 V1326.076 Q1825.5 1329.481 1839.5 1326.076 V1278.406 Z" fill="#2160a5" stroke="#111" stroke-width="1.6"/><path d="M1810.94 1275.001 H1840.06 V1278.406 Q1825.5 1281.13 1810.94 1278.406 Z" fill="#6e6e6e" stroke="#111" stroke-width="1.6"/><path d="M1811.5 1263.424 V1275.001 Q1825.5 1277.725 1839.5 1275.001 V1263.424 Z" fill="#878787" stroke="#111" stroke-width="1.6"/><ellipse cx="1825.5" cy="1263.424" rx="14.0" ry="2.723999999999996" fill="#878787" stroke="#111" stroke-width="1.6"/><path d="M1851.6 1278.406 V1326.076 Q1865.6 1329.481 1879.6 1326.076 V1278.406 Z" fill="#2160a5" stroke="#111" stroke-width="1.6"/><path d="M1851.04 1275.001 H1880.1599999999999 V1278.406 Q1865.6 1281.13 1851.04 1278.406 Z" fill="#6e6e6e" stroke="#111" stroke-width="1.6"/><path d="M1851.6 1263.424 V1275.001 Q1865.6 1277.725 1879.6 1275.001 V1263.424 Z" fill="#878787" stroke="#111" stroke-width="1.6"/><ellipse cx="1865.6" cy="1263.424" rx="14.0" ry="2.723999999999996" fill="#878787" stroke="#111" stroke-width="1.6"/><path d="M1477.228 1346.2 H1524.572 V1349.2630000000001 L1527.8 1357.9415000000001 H1474.0 L1477.228 1349.2630000000001 Z" fill="#878787" stroke="#111" stroke-width="1.3"/><path d="M1493.368 1347.221 Q1500.9 1352.326 1508.432 1347.221" fill="none" stroke="#111" stroke-width="1.1"/><path d="M1474.0 1357.9415000000001 Q1476.152 1402.355 1474.0 1445.2369999999999 Q1474.0 1448.3 1476.69 1448.3 H1525.11 Q1527.8 1448.3 1527.8 1445.2369999999999 Q1525.648 1402.355 1527.8 1357.9415000000001 Z" fill="#5b6b18" stroke="#111" stroke-width="1.3"/><path d="M1547.428 1346.2 H1594.772 V1349.2630000000001 L1598.0 1357.9415000000001 H1544.2 L1547.428 1349.2630000000001 Z" fill="#878787" stroke="#111" stroke-width="1.3"/><path d="M1563.568 1347.221 Q1571.1 1352.326 1578.632 1347.221" fill="none" stroke="#111" stroke-width="1.1"/><path d="M1544.2 1357.9415000000001 Q1546.352 1402.355 1544.2 1445.2369999999999 Q1544.2 1448.3 1546.89 1448.3 H1595.31 Q1598.0 1448.3 1598.0 1445.2369999999999 Q1595.848 1402.355 1598.0 1357.9415000000001 Z" fill="#5b6b18" stroke="#111" stroke-width="1.3"/><path d="M1618.228 1346.2 H1665.572 V1349.2630000000001 L1668.8 1357.9415000000001 H1615.0 L1618.228 1349.2630000000001 Z" fill="#878787" stroke="#111" stroke-width="1.3"/><path d="M1634.368 1347.221 Q1641.9 1352.326 1649.432 1347.221" fill="none" stroke="#111" stroke-width="1.1"/><path d="M1615.0 1357.9415000000001 Q1617.152 1402.355 1615.0 1445.2369999999999 Q1615.0 1448.3 1617.69 1448.3 H1666.11 Q1668.8 1448.3 1668.8 1445.2369999999999 Q1666.648 1402.355 1668.8 1357.9415000000001 Z" fill="#5b6b18" stroke="#111" stroke-width="1.3"/><path d="M1688.728 1346.2 H1736.072 V1349.2630000000001 L1739.3 1357.9415000000001 H1685.5 L1688.728 1349.2630000000001 Z" fill="#878787" stroke="#111" stroke-width="1.3"/><path d="M1704.868 1347.221 Q1712.4 1352.326 1719.932 1347.221" fill="none" stroke="#111" stroke-width="1.1"/><path d="M1685.5 1357.9415000000001 Q1687.652 1402.355 1685.5 1445.2369999999999 Q1685.5 1448.3 1688.19 1448.3 H1736.61 Q1739.3 1448.3 1739.3 1445.2369999999999 Q1737.148 1402.355 1739.3 1357.9415000000001 Z" fill="#5b6b18" stroke="#111" stroke-width="1.3"/><path d="M1759.228 1346.2 H1806.572 V1349.2630000000001 L1809.8 1357.9415000000001 H1756.0 L1759.228 1349.2630000000001 Z" fill="#878787" stroke="#111" stroke-width="1.3"/><path d="M1775.368 1347.221 Q1782.9 1352.326 1790.432 1347.221" fill="none" stroke="#111" stroke-width="1.1"/><path d="M1756.0 1357.9415000000001 Q1758.152 1402.355 1756.0 1445.2369999999999 Q1756.0 1448.3 1758.69 1448.3 H1807.11 Q1809.8 1448.3 1809.8 1445.2369999999999 Q1807.648 1402.355 1809.8 1357.9415000000001 Z" fill="#5b6b18" stroke="#111" stroke-width="1.3"/><path d="M1829.6280000000002 1346.2 H1876.972 V1349.2630000000001 L1880.2 1357.9415000000001 H1826.4 L1829.6280000000002 1349.2630000000001 Z" fill="#878787" stroke="#111" stroke-width="1.3"/><path d="M1845.768 1347.221 Q1853.3000000000002 1352.326 1860.832 1347.221" fill="none" stroke="#111" stroke-width="1.1"/><path d="M1826.4 1357.9415000000001 Q1828.5520000000001 1402.355 1826.4 1445.2369999999999 Q1826.4 1448.3 1829.0900000000001 1448.3 H1877.51 Q1880.2 1448.3 1880.2 1445.2369999999999 Q1878.048 1402.355 1880.2 1357.9415000000001 Z" fill="#5b6b18" stroke="#111" stroke-width="1.3"/><rect x="1574.2" y="524.5" width="17.6" height="17.6" rx="4" fill="#000" stroke="#3c3c3c" stroke-width="2.6"/><rect x="1654.2" y="524.5" width="17.6" height="17.6" rx="4" fill="#000" stroke="#3c3c3c" stroke-width="2.6"/><rect x="1614.2" y="524.5" width="17.6" height="17.6" rx="4" fill="#000" stroke="#3c3c3c" stroke-width="2.6"/><rect x="1673.2" y="524.5" width="17.6" height="17.6" rx="4" fill="#fff" stroke="#000" stroke-width="2.6"/><rect x="1753.2" y="524.5" width="17.6" height="17.6" rx="4" fill="#fff" stroke="#000" stroke-width="2.6"/><rect x="1777.2" y="524.5" width="17.6" height="17.6" rx="4" fill="#fff" stroke="#000" stroke-width="2.6"/><rect x="1856.9" y="524.5" width="17.6" height="17.6" rx="4" fill="#fff" stroke="#000" stroke-width="2.6"/><rect x="1712.8" y="524.5" width="17.6" height="17.6" rx="4" fill="#fff" stroke="#000" stroke-width="2.6"/><rect x="1816.9" y="524.5" width="17.6" height="17.6" rx="4" fill="#fff" stroke="#000" stroke-width="2.6"/><rect x="1574.2" y="583.4000000000001" width="17.6" height="17.6" rx="4" fill="#000" stroke="#3c3c3c" stroke-width="2.6"/><rect x="1654.2" y="583.4000000000001" width="17.6" height="17.6" rx="4" fill="#000" stroke="#3c3c3c" stroke-width="2.6"/><rect x="1673.2" y="583.4000000000001" width="17.6" height="17.6" rx="4" fill="#fff" stroke="#000" stroke-width="2.6"/><rect x="1753.2" y="583.4000000000001" width="17.6" height="17.6" rx="4" fill="#fff" stroke="#000" stroke-width="2.6"/><rect x="1777.2" y="583.4000000000001" width="17.6" height="17.6" rx="4" fill="#fff" stroke="#000" stroke-width="2.6"/><rect x="1856.9" y="583.4000000000001" width="17.6" height="17.6" rx="4" fill="#fff" stroke="#000" stroke-width="2.6"/><rect x="1574.2" y="641.9000000000001" width="17.6" height="17.6" rx="4" fill="#000" stroke="#3c3c3c" stroke-width="2.6"/><rect x="1654.2" y="641.9000000000001" width="17.6" height="17.6" rx="4" fill="#000" stroke="#3c3c3c" stroke-width="2.6"/><rect x="1614.2" y="641.9000000000001" width="17.6" height="17.6" rx="4" fill="#000" stroke="#3c3c3c" stroke-width="2.6"/><rect x="1673.2" y="641.9000000000001" width="17.6" height="17.6" rx="4" fill="#fff" stroke="#000" stroke-width="2.6"/><rect x="1753.2" y="641.9000000000001" width="17.6" height="17.6" rx="4" fill="#fff" stroke="#000" stroke-width="2.6"/><rect x="1777.2" y="641.9000000000001" width="17.6" height="17.6" rx="4" fill="#fff" stroke="#000" stroke-width="2.6"/><rect x="1856.9" y="641.9000000000001" width="17.6" height="17.6" rx="4" fill="#fff" stroke="#000" stroke-width="2.6"/><rect x="1712.8" y="641.9000000000001" width="17.6" height="17.6" rx="4" fill="#fff" stroke="#000" stroke-width="2.6"/><rect x="1816.9" y="641.9000000000001" width="17.6" height="17.6" rx="4" fill="#fff" stroke="#000" stroke-width="2.6"/><path d="M203.4 1149.5 Q212.70000000000002 1146.5 222 1149.5 L222.5 1157.5 H202.9 Z" fill="#878787" stroke="#6a6a6a" stroke-width="1.1"/><path d="M202.9 1157.5 H222.5 Q227 1172.5 229 1192.5 V1230 H195.9 V1192.5 Q198.4 1172.5 202.9 1157.5 Z" fill="#c8c8c8" stroke="#6a6a6a" stroke-width="1.1"/><path d="M287.6 1155.5 V1218 Q322.8 1234 358 1218 V1155.5 Z" fill="#878787" stroke="#555" stroke-width="1.1"/><ellipse cx="322.8" cy="1154.5" rx="35.19999999999999" ry="7" fill="#e6e6e6" stroke="#555" stroke-width="1.1"/><path d="M418.456 1155.2 V1149.46 Q418.456 1147 422.44 1147 H430.408 V1155.2 Z" fill="#666" stroke="#777" stroke-width="1.1"/><path d="M415.966 1165.45 V1157.25 Q415.966 1155.2 417.46 1155.2 H431.404 Q432.898 1155.2 432.898 1157.25 V1165.45 Z" fill="#666" stroke="#777" stroke-width="1.1"/><path d="M415.966 1165.45 Q414.472 1169.14 410.986 1173.24 Q407.998 1177.34 407.998 1183.9 L407.5 1219.16 Q407.5 1228.18 412.48 1228.59 Q432.4 1229.82 452.32 1228.59 Q457.3 1228.18 457.3 1220.8 L455.80600000000004 1185.54 Q456.30400000000003 1174.06 448.834 1171.19 L437.38 1168.73 Q433.894 1167.5 432.898 1165.45 Z" fill="#c8c8c8" stroke="#777" stroke-width="1.1"/><path d="M434.89 1176.11 Q434.89 1173.65 438.37600000000003 1174.06 Q450.32800000000003 1175.7 450.826 1183.9 L450.32800000000003 1196.2 Q449.83 1199.48 448.336 1196.2 Q446.344 1188.0 443.356 1183.08 Q434.89 1178.16 434.89 1176.11 Z" fill="#fbe7a8" stroke="#777" stroke-width="1.1"/><rect x="535.5" y="1147.5" width="14" height="8" rx="3" fill="#878787" stroke="#6a6a6a" stroke-width="1.1"/><path d="M536.5 1155.5 Q527 1167.5 527 1177.5 V1227 Q527 1230 531 1230 H554 Q558 1230 558 1227 V1177.5 Q558 1167.5 548.5 1155.5 Z" fill="#c8c8c8" stroke="#6a6a6a" stroke-width="1.1"/><path d="M527 1192.5 H558" stroke="#777" stroke-width="1.2"/><path d="M527 1199.5 H558" stroke="#777" stroke-width="1.2"/><path d="M527 1206.5 H558" stroke="#777" stroke-width="1.2"/><path d="M527 1213.5 H558" stroke="#777" stroke-width="1.2"/><path d="M197 1279.7 V1335.8 Q213.0 1341.8 229 1335.8 V1279.7 Z" fill="#c8c8c8" stroke="#6a6a6a" stroke-width="1.1"/><path d="M196 1259.7 Q213.0 1255.7 230 1259.7 V1277.7 Q213.0 1281.7 196 1277.7 Z" fill="#878787" stroke="#6a6a6a" stroke-width="1.1"/><path d="M195 1274.7 H231 V1279.7 Q213.0 1282.7 195 1279.7 Z" fill="#6e6e6e" stroke="#6a6a6a" stroke-width="1.1"/><rect x="318.228" y="1257.7" width="9.744000000000003" height="8.209999999999992" fill="#878787" stroke="#6a6a6a" stroke-width="1.1"/><path d="M317.532 1265.91 Q309.18 1271.657 309.18 1282.33 Q309.18 1290.54 313.356 1298.75 Q305.7 1313.528 305.7 1321.738 V1337.337 Q323.1 1341.442 340.5 1337.337 V1321.738 Q340.5 1313.528 332.844 1298.75 Q337.02 1290.54 337.02 1282.33 Q337.02 1271.657 328.668 1265.91 Z" fill="#c8c8c8" stroke="#6a6a6a" stroke-width="1.1"/><rect x="424.48" y="1326.664" width="18.04" height="13.135999999999985" fill="#878787" stroke="#6a6a6a" stroke-width="1.1"/><path d="M413.0 1266.731 L418.33 1323.3799999999999 Q418.74 1326.664 420.38 1326.664 H446.62 Q448.26 1326.664 448.67 1323.3799999999999 L454.0 1266.731 Z" fill="#c8c8c8" stroke="#6a6a6a" stroke-width="1.1"/><path d="M416.28 1302.855 Q433.5 1316.812 450.72 1302.855" fill="none" stroke="#6a6a6a" stroke-width="1.1"/><rect x="412.18" y="1257.7" width="42.64" height="9.03099999999999" rx="2" fill="#eee" stroke="#6a6a6a" stroke-width="1.1"/><path d="M527 1261.7 V1335.8 Q542.5 1341.8 558 1335.8 V1261.7 Z" fill="#e6e6e6" stroke="#6a6a6a" stroke-width="1.1"/><ellipse cx="542.5" cy="1261.7" rx="15.5" ry="4" fill="#f2f2f2" stroke="#6a6a6a" stroke-width="1.1"/><ellipse cx="542.5" cy="1261.7" rx="3" ry="1.5" fill="#bbb"/></svg>
<div class="a" style="left:1135px;top:154.5px;width:418px;height:1169.5px;background:#fff;border-radius:13px;box-shadow:0 3px 22px rgba(0,0,0,0.2)"></div>
<svg class="a" style="left:0;top:0" width="2584" height="1576"><rect x="1155" y="174.4" width="377.7" height="50.79999999999998" rx="16" fill="#f3f4f6"/><rect x="1155" y="314.5" width="377.7" height="51.80000000000001" rx="16" fill="#f3f4f6"/><rect x="1155" y="631" width="377.7" height="51.5" rx="16" fill="#f3f4f6"/><rect x="1155" y="771" width="377.7" height="51.299999999999955" rx="16" fill="#f3f4f6"/><rect x="1155" y="939.4" width="377.7" height="51.89999999999998" rx="16" fill="#f3f4f6"/><rect x="1173.2" y="240" width="39.5" height="39.5" rx="8" fill="#5a6b17" /><rect x="1217.2" y="240" width="39.5" height="39.5" rx="8" fill="#d93033" /><rect x="1261.2" y="240" width="39.5" height="39.5" rx="8" fill="#83ade3" /><rect x="1305.2" y="240" width="39.5" height="39.5" rx="8" fill="#2160a5" /><rect x="1349.2" y="240" width="39.5" height="39.5" rx="8" fill="#33c3d6" /><rect x="1393.2" y="240" width="39.5" height="39.5" rx="8" fill="#a630d6" /><rect x="1437.2" y="240" width="39.5" height="39.5" rx="8" fill="#cfe583" /><rect x="1481.2" y="240" width="39.5" height="39.5" rx="8" fill="#ff8a0d" /><path d="M1237.1 239 H1258 V261 Z" fill="#fff"/><path d="M1237.1 240 V260 H1257.2 Z" fill="#ae2428"/><rect x="1173.2" y="381" width="39.5" height="39.5" rx="8" fill="#c8c8c8" /><rect x="1217.2" y="381" width="39.5" height="39.5" rx="8" fill="#f8e89c" /><rect x="1261.2" y="381" width="39.5" height="39.5" rx="8" fill="#fccf9b" /><rect x="1305.2" y="381" width="39.5" height="39.5" rx="8" fill="#eea9a9" /><rect x="1349.2" y="381" width="39.5" height="39.5" rx="8" fill="#dba8ec" /><rect x="1393.2" y="381" width="39.5" height="39.5" rx="8" fill="#a9c8ec" /><rect x="1437.2" y="381" width="39.5" height="39.5" rx="8" fill="#ace6ee" /><rect x="1481.2" y="381" width="39.5" height="39.5" rx="8" fill="#deeda9" /><rect x="1173.2" y="425" width="39.5" height="39.5" rx="8" fill="#b1b1b1" /><rect x="1217.2" y="425" width="39.5" height="39.5" rx="8" fill="#f5de70" /><rect x="1261.2" y="425" width="39.5" height="39.5" rx="8" fill="#fdb86c" /><rect x="1305.2" y="425" width="39.5" height="39.5" rx="8" fill="#e88181" /><rect x="1349.2" y="425" width="39.5" height="39.5" rx="8" fill="#cc81e6" /><rect x="1393.2" y="425" width="39.5" height="39.5" rx="8" fill="#84ade3" /><rect x="1437.2" y="425" width="39.5" height="39.5" rx="8" fill="#85d9e6" /><rect x="1481.2" y="425" width="39.5" height="39.5" rx="8" fill="#cfe583" /><rect x="1173.2" y="469" width="39.5" height="39.5" rx="8" fill="#858585" /><rect x="1217.2" y="469" width="39.5" height="39.5" rx="8" fill="#f1cf1b" /><rect x="1261.2" y="469" width="39.5" height="39.5" rx="8" fill="#ff8a0d" /><rect x="1305.2" y="469" width="39.5" height="39.5" rx="8" fill="#d93033" /><rect x="1349.2" y="469" width="39.5" height="39.5" rx="8" fill="#a630d6" /><rect x="1393.2" y="469" width="39.5" height="39.5" rx="8" fill="#3381d6" /><rect x="1437.2" y="469" width="39.5" height="39.5" rx="8" fill="#33c3d6" /><rect x="1481.2" y="469" width="39.5" height="39.5" rx="8" fill="#b4d62f" /><rect x="1173.2" y="513" width="39.5" height="39.5" rx="8" fill="#646464" /><rect x="1217.2" y="513" width="39.5" height="39.5" rx="8" fill="#b49e10" /><rect x="1261.2" y="513" width="39.5" height="39.5" rx="8" fill="#c26800" /><rect x="1305.2" y="513" width="39.5" height="39.5" rx="8" fill="#a32023" /><rect x="1349.2" y="513" width="39.5" height="39.5" rx="8" fill="#7e20a0" /><rect x="1393.2" y="513" width="39.5" height="39.5" rx="8" fill="#2160a5" /><rect x="1437.2" y="513" width="39.5" height="39.5" rx="8" fill="#2295a3" /><rect x="1481.2" y="513" width="39.5" height="39.5" rx="8" fill="#87a322" /><rect x="1173.2" y="557" width="39.5" height="39.5" rx="8" fill="#404040" /><rect x="1217.2" y="557" width="39.5" height="39.5" rx="8" fill="#7a6a0c" /><rect x="1261.2" y="557" width="39.5" height="39.5" rx="8" fill="#824400" /><rect x="1305.2" y="557" width="39.5" height="39.5" rx="8" fill="#6e1717" /><rect x="1349.2" y="557" width="39.5" height="39.5" rx="8" fill="#53166b" /><rect x="1393.2" y="557" width="39.5" height="39.5" rx="8" fill="#163f6e" /><rect x="1437.2" y="557" width="39.5" height="39.5" rx="8" fill="#17636e" /><rect x="1481.2" y="557" width="39.5" height="39.5" rx="8" fill="#5a6b17" /><rect x="1304" y="469.5" width="41.8" height="40.3" rx="9" fill="none" stroke="#fbd978" stroke-width="1.6"/><rect x="1305.2" y="469" width="39.5" height="39.5" rx="8" fill="#d93033"/><path d="M1325 468 H1347 V490 Z" fill="#fff"/><path d="M1325 469 V489 H1345 Z" fill="#ae2428"/><rect x="1174.2" y="698" width="37.5" height="37.5" rx="7" fill="#fff" stroke="#c8c8c8" stroke-width="2"/><rect x="1217.2" y="697" width="39.5" height="39.5" rx="8" fill="#000000" /><rect x="1261.2" y="697" width="39.5" height="39.5" rx="8" fill="#ff0000" /><rect x="1305.2" y="697" width="39.5" height="39.5" rx="8" fill="#ffc000" /><rect x="1349.2" y="697" width="39.5" height="39.5" rx="8" fill="#ffff00" /><rect x="1393.2" y="697" width="39.5" height="39.5" rx="8" fill="#00b050" /><rect x="1437.2" y="697" width="39.5" height="39.5" rx="8" fill="#0070c0" /><rect x="1481.2" y="697" width="39.5" height="39.5" rx="8" fill="#5f3093" /><rect x="1171" y="867.5" width="192" height="7.2" rx="3.6" fill="#c6c6c6"/><rect x="1360" y="852" width="26" height="34" rx="3.5" fill="#fff" stroke="#555" stroke-width="2" filter="url(#thsh)"/><defs><filter id="thsh" x="-50%" y="-50%" width="200%" height="200%"><feDropShadow dx="1" dy="1.5" stdDeviation="1.2" flood-opacity="0.35"/></filter></defs><rect x="1397.3" y="847" width="79.4" height="47.6" rx="13" fill="#efefef"/><path d="M1488 1101.7 Q1485 1101.7 1485 1098.7 V1090.7" fill="none" stroke="#3a3a3a" stroke-width="1.8" stroke-linecap="round"/><path d="M1486.5 1104.2 H1498.5 Q1501 1104.2 1501.5 1101.7" fill="none" stroke="#3a3a3a" stroke-width="1.8" stroke-linecap="round"/><rect x="1489" y="1084.7" width="16.5" height="16.5" rx="3.2" fill="#fff" stroke="#3a3a3a" stroke-width="1.8"/><path d="M1493.5 1096.7 L1500.5 1089.7 M1495 1089.5 H1500.7 V1095.2" fill="none" stroke="#3a3a3a" stroke-width="1.8" stroke-linecap="round" stroke-linejoin="round"/><path d="M1488 1161.7 Q1485 1161.7 1485 1158.7 V1150.7" fill="none" stroke="#3a3a3a" stroke-width="1.8" stroke-linecap="round"/><path d="M1486.5 1164.2 H1498.5 Q1501 1164.2 1501.5 1161.7" fill="none" stroke="#3a3a3a" stroke-width="1.8" stroke-linecap="round"/><rect x="1489" y="1144.7" width="16.5" height="16.5" rx="3.2" fill="#fff" stroke="#3a3a3a" stroke-width="1.8"/><path d="M1493.5 1156.7 L1500.5 1149.7 M1495 1149.5 H1500.7 V1155.2" fill="none" stroke="#3a3a3a" stroke-width="1.8" stroke-linecap="round" stroke-linejoin="round"/><path d="M1488 1221.7 Q1485 1221.7 1485 1218.7 V1210.7" fill="none" stroke="#3a3a3a" stroke-width="1.8" stroke-linecap="round"/><path d="M1486.5 1224.2 H1498.5 Q1501 1224.2 1501.5 1221.7" fill="none" stroke="#3a3a3a" stroke-width="1.8" stroke-linecap="round"/><rect x="1489" y="1204.7" width="16.5" height="16.5" rx="3.2" fill="#fff" stroke="#3a3a3a" stroke-width="1.8"/><path d="M1493.5 1216.7 L1500.5 1209.7 M1495 1209.5 H1500.7 V1215.2" fill="none" stroke="#3a3a3a" stroke-width="1.8" stroke-linecap="round" stroke-linejoin="round"/><path d="M1488 1281.7 Q1485 1281.7 1485 1278.7 V1270.7" fill="none" stroke="#3a3a3a" stroke-width="1.8" stroke-linecap="round"/><path d="M1486.5 1284.2 H1498.5 Q1501 1284.2 1501.5 1281.7" fill="none" stroke="#3a3a3a" stroke-width="1.8" stroke-linecap="round"/><rect x="1489" y="1264.7" width="16.5" height="16.5" rx="3.2" fill="#fff" stroke="#3a3a3a" stroke-width="1.8"/><path d="M1493.5 1276.7 L1500.5 1269.7 M1495 1269.5 H1500.7 V1275.2" fill="none" stroke="#3a3a3a" stroke-width="1.8" stroke-linecap="round" stroke-linejoin="round"/></svg>
<div class="t" style="left:1167.4px;top:186.6px;font-size:25.29px;line-height:25.29px;color:#3a3a3a;font-weight:normal;transform:scaleX(0.9240);">Recent Fills</div>
<div class="t" style="left:1167.4px;top:326.7px;font-size:25.15px;line-height:25.15px;color:#3a3a3a;font-weight:normal;transform:scaleX(0.9335);">Standard Colors</div>
<div class="t" style="left:1167.4px;top:645.4px;font-size:22.82px;line-height:22.82px;color:#3a3a3a;font-weight:normal;transform:scaleX(1.0302);">Primary Colors</div>
<div class="t" style="left:1167.4px;top:785.5px;font-size:22.38px;line-height:22.38px;color:#3a3a3a;font-weight:normal;transform:scaleX(1.0596);">Opacity</div>
<div class="t" style="left:1404.8px;top:859.8px;font-size:23.26px;line-height:23.26px;color:#3a3a3a;font-weight:normal;transform:scaleX(1.0616);">100%</div>
<div class="t" style="left:1167.4px;top:953.0px;font-size:23.11px;line-height:23.11px;color:#3a3a3a;font-weight:normal;transform:scaleX(1.0268);">More Fill Options</div>
<div class="t" style="left:1178.0px;top:1021.6px;font-size:24.42px;line-height:24.42px;color:#3a3a3a;font-weight:normal;transform:scaleX(0.9534);">No Fill</div>
<div class="t" style="left:1178.0px;top:1081.6px;font-size:24.13px;line-height:24.13px;color:#3a3a3a;font-weight:normal;transform:scaleX(0.9591);">More Colors</div>
<div class="t" style="left:1178.0px;top:1141.8px;font-size:24.42px;line-height:24.42px;color:#3a3a3a;font-weight:normal;transform:scaleX(0.9664);">Gradient</div>
<div class="t" style="left:1178.0px;top:1201.1px;font-size:24.71px;line-height:24.71px;color:#3a3a3a;font-weight:normal;transform:scaleX(0.9636);">Textures</div>
<div class="t" style="left:1178.0px;top:1261.6px;font-size:24.42px;line-height:24.42px;color:#3a3a3a;font-weight:normal;transform:scaleX(0.9571);">Hatch</div>
<svg class="a" style="left:0;top:0" width="2584" height="1576"><defs><filter id="pinsh" x="-50%" y="-50%" width="200%" height="200%"><feDropShadow dx="0" dy="4" stdDeviation="5" flood-opacity="0.28"/></filter></defs><circle cx="1550.4" cy="155.9" r="24" fill="#fff" stroke="#333" stroke-width="2.2" filter="url(#pinsh)"/><path d="M1539.5 167.5 L1545.5 161.5 M1541.5 154.5 L1551 164 L1552.8 158.5 L1559.5 153.5 Q1561.5 152 1563 153.3 Q1564.3 151.8 1562.8 150.3 L1556.8 144.3 Q1555.2 142.8 1553.7 144.3 L1548.8 151 L1543.5 152.8 Z" fill="#fff" stroke="#333" stroke-width="1.9" stroke-linejoin="round" stroke-linecap="round"/><path d="M1329 494.5 V524.5 L1336 516.5 L1343.8 534.5 L1348.8 532.5 L1341.3 514.5 L1351.5 514.5 Z" fill="#fff" stroke="#000" stroke-width="1.9" stroke-linejoin="miter"/></svg>
</body></html>
